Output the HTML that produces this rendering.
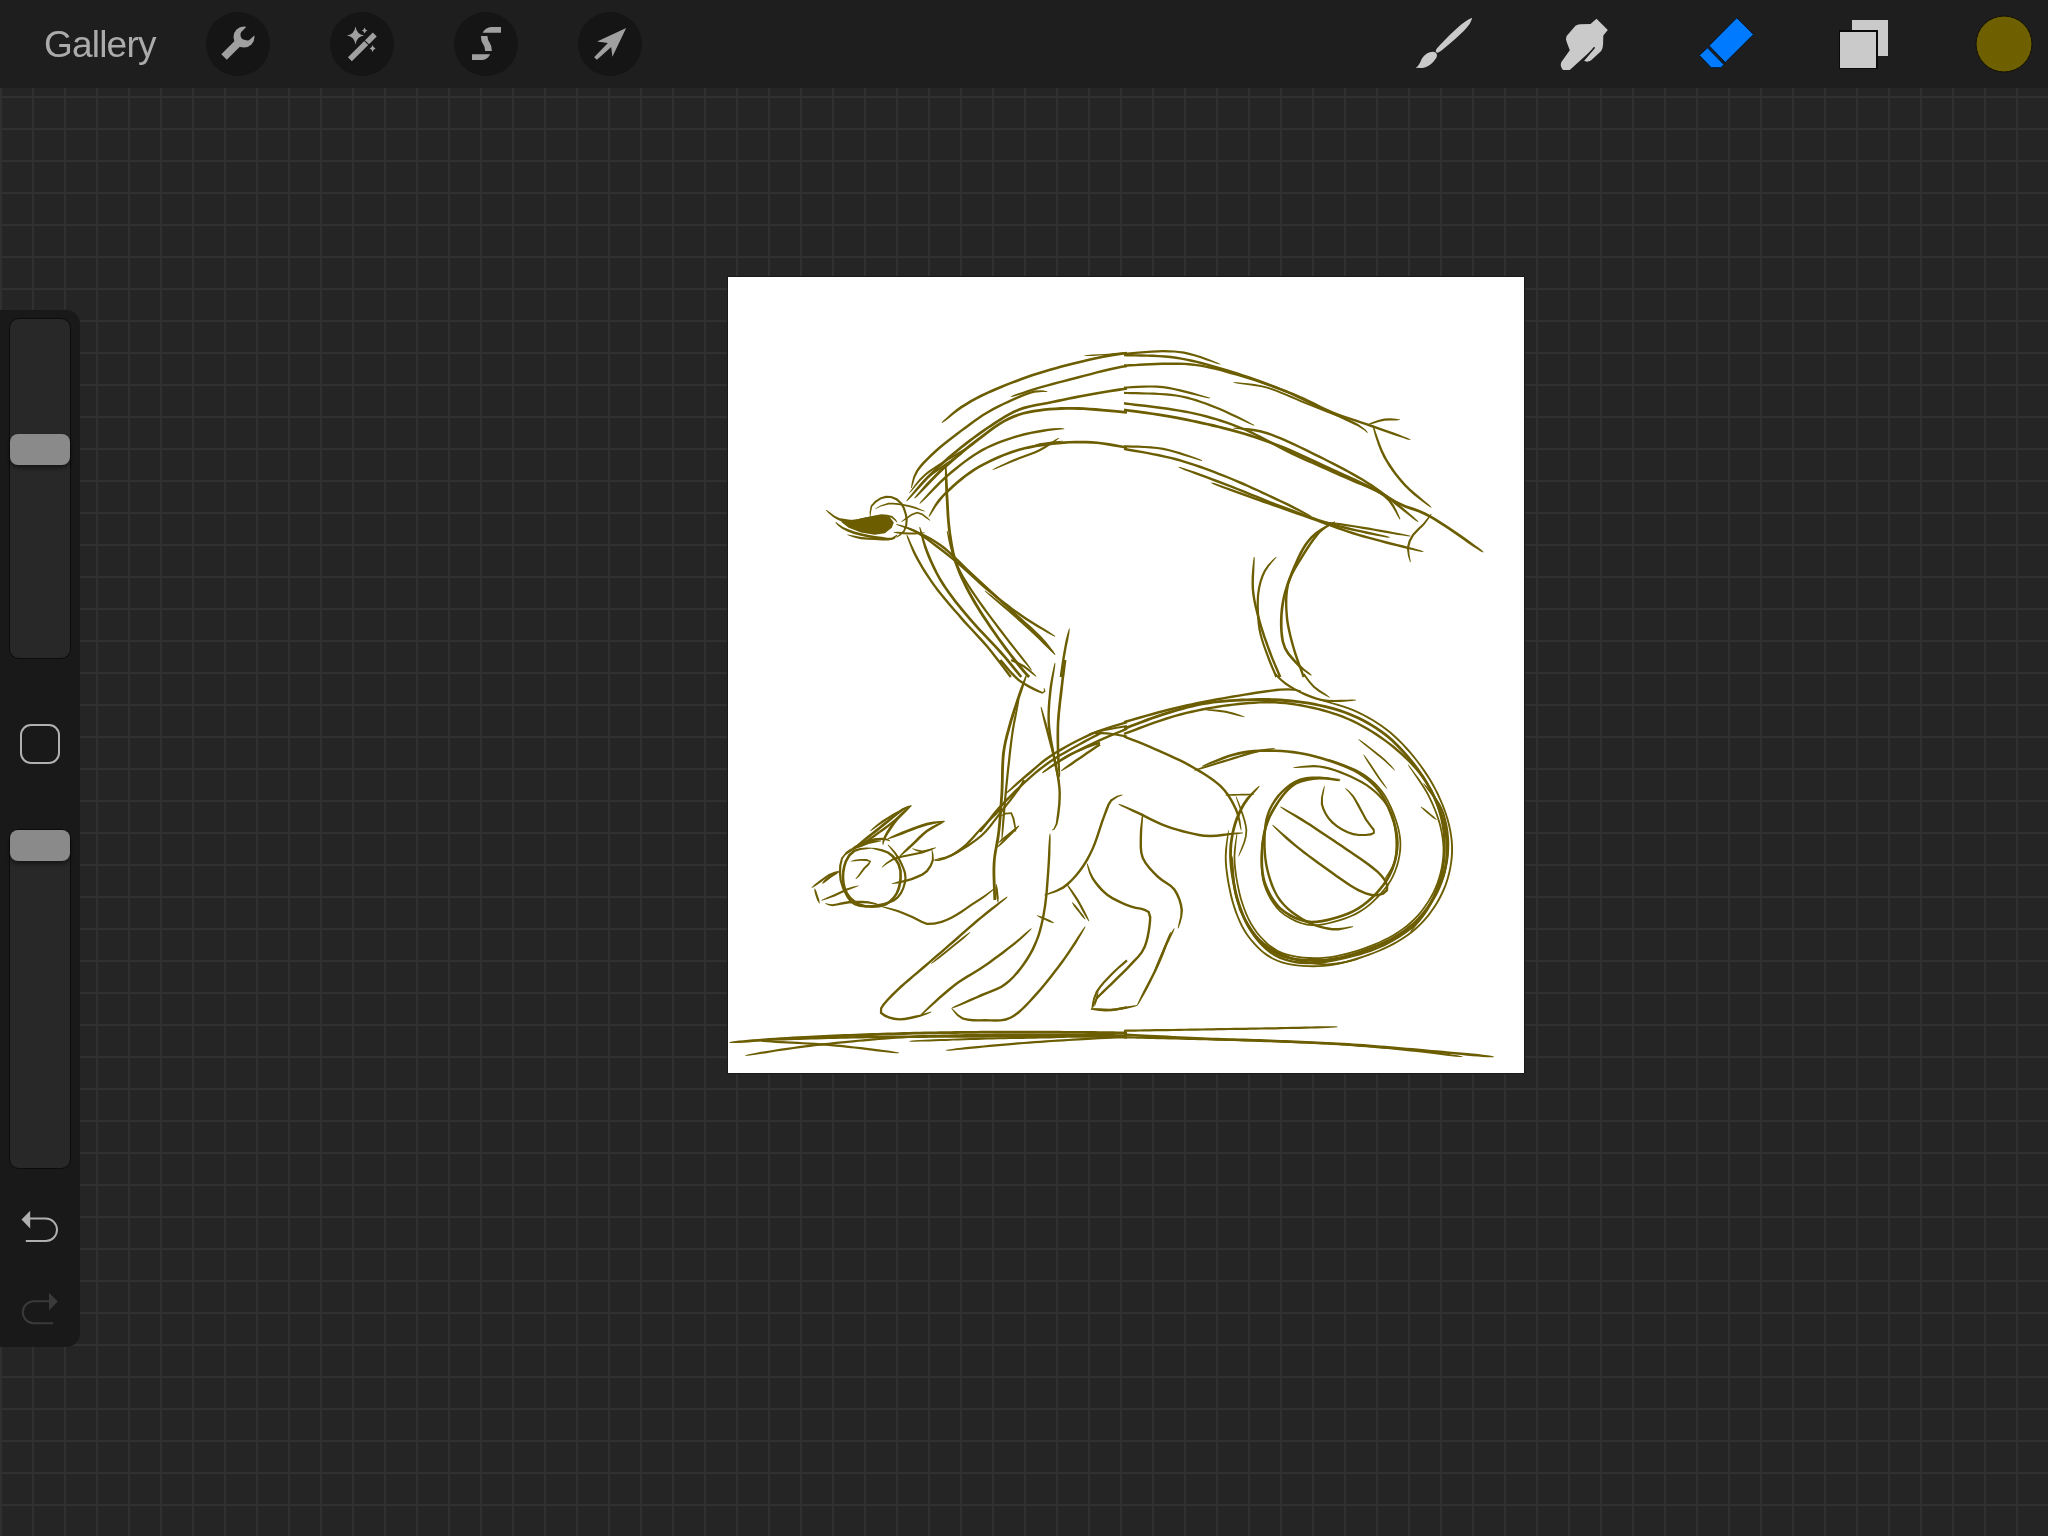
<!DOCTYPE html>
<html><head><meta charset="utf-8">
<style>
html,body{margin:0;padding:0;}
body{width:2048px;height:1536px;overflow:hidden;position:relative;background-color:#252525;
background-image:linear-gradient(to right,#303030 2px,transparent 2px),linear-gradient(to bottom,#303030 2px,transparent 2px);
background-size:32px 32px;font-family:"Liberation Sans",sans-serif;}
.abs{position:absolute;}
#top{left:0;top:0;width:2048px;height:88px;background:#1e1e1e;}
#gallery{will-change:transform;left:44px;top:23px;font-size:37px;letter-spacing:-0.8px;color:#ababab;line-height:44px;white-space:nowrap;}
.cbtn{width:64px;height:64px;border-radius:50%;background:#151515;top:12px;}
#canvas{left:728px;top:277px;width:796px;height:796px;background:#fff;box-shadow:0 0 0 1px #1a1a1a;}
#side{left:0;top:310px;width:80px;height:1037px;background:#191919;border-radius:0 14px 14px 0;}
.track{left:9px;width:62px;background:#282828;border:1px solid #0c0c0c;box-sizing:border-box;border-radius:10px;}
.thumb{left:10px;width:60px;height:31px;background:#8a8a8a;border-radius:8px;box-shadow:0 3px 4px rgba(0,0,0,.45);}
</style></head><body>
<div id="top" class="abs"></div>
<div id="gallery" class="abs">Gallery</div>
<div class="abs cbtn" style="left:206px"></div>
<div class="abs cbtn" style="left:330px"></div>
<div class="abs cbtn" style="left:454px"></div>
<div class="abs cbtn" style="left:578px"></div>
<div id="canvas" class="abs"></div>
<!--SKETCH--><svg class="abs" style="left:0;top:0" width="2048" height="1536" viewBox="0 0 2048 1536"><g fill="#6b5d00"><path d="M942.1,423.1L944.9,421.3L948.6,418.4L952.9,415.0L957.5,411.6L962.1,408.3L966.7,405.4L971.4,402.6L976.4,399.8L981.9,397.0L988.0,394.1L992.2,392.2L996.8,390.2L1001.6,388.2L1006.6,386.1L1011.7,384.1L1016.9,382.2L1022.0,380.3L1026.9,378.5L1031.8,376.8L1036.6,375.3L1041.5,373.7L1046.4,372.3L1051.3,370.8L1056.1,369.5L1061.0,368.1L1065.9,366.8L1070.9,365.5L1076.0,364.2L1081.2,363.0L1086.4,361.7L1091.5,360.6L1096.3,359.5L1100.8,358.6L1104.9,357.7L1112.1,356.4L1118.4,355.5L1123.5,354.8L1127.2,354.4L1126.8,351.7L1123.2,352.2L1118.1,352.9L1111.7,353.8L1104.4,355.1L1100.2,356.0L1095.7,357.0L1090.9,358.0L1085.8,359.2L1080.6,360.4L1075.4,361.7L1070.2,363.0L1065.2,364.3L1060.3,365.6L1055.4,366.9L1050.5,368.3L1045.6,369.7L1040.7,371.2L1035.8,372.7L1030.9,374.3L1026.0,376.0L1021.1,377.8L1015.9,379.7L1010.8,381.7L1005.6,383.7L1000.6,385.7L995.7,387.8L991.1,389.8L986.9,391.7L980.7,394.6L975.1,397.5L970.0,400.3L965.3,403.2L960.6,406.1L955.9,409.4L951.4,413.2L947.3,416.9L943.9,420.1L941.6,422.5Z"/><path d="M1083.8,355.8L1087.5,356.0L1092.8,355.9L1098.8,355.6L1104.7,355.3L1110.7,354.8L1117.2,354.2L1123.0,353.6L1127.1,353.2L1126.9,351.9L1122.9,352.3L1117.0,352.8L1110.6,353.5L1104.6,353.9L1098.8,354.3L1092.8,354.6L1087.5,355.0L1083.8,355.4Z"/><path d="M1011.0,397.1L1014.1,396.5L1018.2,395.3L1023.1,393.9L1028.5,392.3L1034.1,390.5L1039.8,388.8L1044.2,387.6L1049.0,386.3L1053.9,385.0L1059.0,383.6L1064.1,382.3L1069.2,380.9L1074.2,379.7L1078.9,378.4L1085.0,376.8L1091.2,375.2L1097.3,373.6L1103.0,372.2L1108.2,370.9L1112.7,369.9L1122.0,368.0L1127.2,367.3L1126.8,364.9L1121.6,365.6L1112.2,367.5L1107.7,368.6L1102.5,369.8L1096.7,371.3L1090.6,372.9L1084.4,374.5L1078.3,376.1L1073.6,377.3L1068.6,378.6L1063.5,379.9L1058.4,381.3L1053.3,382.6L1048.3,384.0L1043.6,385.3L1039.2,386.5L1033.4,388.2L1027.8,390.0L1022.4,391.9L1017.6,393.6L1013.6,395.1L1010.7,396.4Z"/><path d="M911.7,488.0L913.2,483.8L915.0,477.8L918.2,471.6L920.8,468.0L924.0,464.3L927.7,460.4L931.8,456.4L936.1,452.4L940.0,449.0L944.2,445.5L948.6,441.9L953.1,438.4L957.7,434.9L962.1,431.6L966.4,428.4L970.8,425.2L975.1,422.0L979.4,419.0L983.7,416.1L988.0,413.5L993.3,410.5L998.6,407.7L1003.9,405.1L1009.1,402.7L1013.9,400.5L1019.7,398.0L1025.1,395.8L1030.1,394.0L1034.4,392.7L1042.1,391.9L1047.3,391.9L1047.3,391.2L1042.1,390.3L1034.1,390.5L1029.4,391.7L1024.3,393.5L1018.7,395.8L1013.0,398.3L1008.1,400.5L1002.9,402.9L997.5,405.5L992.1,408.3L986.8,411.4L982.4,414.1L978.1,417.0L973.7,420.1L969.3,423.2L965.0,426.4L960.6,429.7L956.2,433.0L951.7,436.5L947.1,440.0L942.7,443.6L938.4,447.1L934.5,450.6L930.2,454.6L926.0,458.7L922.2,462.6L918.9,466.5L916.1,470.4L913.1,477.1L911.6,483.5L911.0,487.9Z"/><path d="M907.0,501.2L909.4,499.1L912.3,496.0L915.8,492.3L919.7,488.1L923.5,483.8L927.4,479.6L931.1,475.8L934.6,472.4L938.1,469.0L941.7,465.7L945.4,462.4L949.1,459.1L953.0,455.8L957.0,452.5L961.2,449.1L965.5,445.7L970.0,442.2L974.5,438.8L979.1,435.4L983.7,432.2L988.2,429.1L992.6,426.2L997.0,423.3L1001.4,420.4L1005.8,417.8L1010.2,415.3L1014.6,413.0L1019.1,411.0L1024.5,409.2L1029.9,407.7L1035.4,406.6L1041.0,405.5L1046.8,404.5L1052.8,403.3L1058.1,402.2L1063.7,401.0L1069.4,399.8L1075.1,398.7L1080.8,397.6L1086.4,396.5L1091.8,395.5L1097.4,394.5L1103.2,393.5L1109.1,392.6L1114.7,391.7L1119.8,390.9L1124.0,390.3L1127.2,389.8L1126.8,387.2L1123.6,387.7L1119.4,388.3L1114.3,389.1L1108.7,390.0L1102.8,390.9L1096.9,391.9L1091.3,392.9L1085.9,393.9L1080.3,395.0L1074.6,396.1L1068.8,397.2L1063.1,398.4L1057.6,399.6L1052.3,400.7L1046.3,401.9L1040.5,402.9L1034.8,404.0L1029.3,405.2L1023.7,406.6L1018.2,408.6L1013.5,410.6L1008.9,412.9L1004.4,415.5L1000.0,418.2L995.5,421.0L991.1,424.0L986.7,426.9L982.2,430.0L977.6,433.3L973.0,436.7L968.4,440.1L963.9,443.6L959.5,447.1L955.3,450.5L951.3,453.8L947.4,457.1L943.6,460.4L939.9,463.7L936.3,467.1L932.7,470.5L929.2,474.0L925.5,477.8L921.6,482.0L917.7,486.4L914.1,490.7L910.9,494.7L908.2,498.1L906.4,500.7Z"/><path d="M914.8,498.6L917.4,496.5L920.6,493.3L924.4,489.5L928.5,485.2L932.8,480.7L937.2,476.2L941.5,472.0L945.3,468.5L949.4,464.9L953.6,461.2L957.9,457.5L962.2,453.9L966.6,450.3L971.0,446.8L975.3,443.5L979.5,440.2L983.8,436.9L988.0,433.7L992.3,430.5L996.5,427.6L1000.7,424.8L1004.8,422.3L1008.9,420.2L1014.0,417.9L1019.0,416.0L1023.9,414.6L1028.9,413.5L1034.1,412.6L1039.7,411.7L1044.7,411.1L1049.9,410.5L1055.3,410.2L1060.8,409.9L1066.5,409.8L1072.4,409.8L1078.5,409.9L1083.7,410.1L1089.5,410.5L1095.7,410.9L1102.0,411.5L1108.1,412.0L1114.0,412.6L1119.2,413.1L1123.6,413.5L1126.9,413.8L1127.1,411.0L1123.8,410.7L1119.4,410.3L1114.2,409.8L1108.4,409.2L1102.2,408.7L1095.9,408.1L1089.7,407.7L1083.9,407.3L1078.6,407.1L1072.4,407.0L1066.5,407.0L1060.7,407.1L1055.1,407.4L1049.7,407.8L1044.4,408.3L1039.3,408.9L1033.6,409.8L1028.3,410.8L1023.2,411.9L1018.1,413.4L1013.0,415.3L1007.6,417.7L1003.5,419.9L999.2,422.4L995.0,425.2L990.7,428.3L986.4,431.4L982.1,434.7L977.8,438.0L973.5,441.3L969.2,444.6L964.9,448.1L960.5,451.7L956.1,455.4L951.7,459.1L947.5,462.8L943.5,466.4L939.6,470.0L935.2,474.2L930.8,478.7L926.4,483.3L922.5,487.8L919.0,491.9L916.2,495.3L914.2,498.1Z"/><path d="M920.0,503.8L922.4,501.8L925.4,498.9L928.9,495.5L932.8,491.6L936.8,487.5L941.0,483.3L945.1,479.4L949.1,475.8L953.1,472.5L957.2,469.2L961.3,465.8L965.5,462.6L969.8,459.5L974.1,456.5L978.4,453.8L982.8,451.2L987.8,448.6L993.0,446.2L998.2,444.0L1003.5,442.0L1008.7,440.2L1013.9,438.6L1019.0,437.0L1025.0,435.4L1031.2,434.1L1037.3,432.9L1043.2,432.0L1048.4,431.1L1052.6,430.4L1060.5,429.4L1064.2,429.2L1064.3,428.5L1060.5,427.9L1052.4,428.3L1048.0,428.8L1042.8,429.6L1036.9,430.5L1030.7,431.7L1024.4,433.1L1018.3,434.7L1013.2,436.2L1008.0,437.9L1002.7,439.8L997.3,441.8L992.0,444.0L986.8,446.4L981.6,449.1L977.2,451.7L972.8,454.5L968.4,457.5L964.1,460.7L959.8,463.9L955.6,467.3L951.5,470.6L947.6,474.0L943.5,477.6L939.3,481.6L935.1,485.8L931.1,490.0L927.4,494.0L924.1,497.7L921.4,500.8L919.4,503.3Z"/><path d="M929.2,516.8L931.2,514.2L933.6,510.5L936.5,506.1L940.0,501.4L944.1,496.6L947.1,493.6L950.5,490.4L954.2,487.0L958.1,483.6L962.2,480.2L966.4,476.8L970.8,473.7L975.1,470.8L979.6,468.1L984.2,465.5L989.1,463.0L994.0,460.7L999.0,458.4L1004.0,456.3L1009.0,454.4L1013.9,452.7L1019.4,451.0L1024.9,449.6L1030.5,448.4L1036.0,447.3L1041.6,446.4L1047.1,445.7L1052.7,445.0L1058.3,444.4L1063.9,443.9L1069.5,443.6L1075.1,443.4L1080.7,443.4L1086.2,443.5L1091.5,443.7L1097.0,444.1L1102.8,444.8L1108.7,445.7L1114.3,446.7L1119.3,447.6L1123.6,448.3L1126.8,448.9L1127.2,446.3L1124.1,445.7L1119.8,445.0L1114.7,444.1L1109.1,443.1L1103.2,442.2L1097.3,441.5L1091.7,441.0L1086.2,440.8L1080.7,440.8L1075.1,440.8L1069.4,441.0L1063.7,441.3L1058.0,441.8L1052.4,442.4L1046.8,443.0L1041.2,443.8L1035.6,444.7L1029.9,445.8L1024.3,447.0L1018.7,448.5L1013.0,450.2L1008.1,452.0L1003.0,453.9L997.9,456.0L992.9,458.3L987.9,460.7L983.0,463.2L978.2,465.8L973.7,468.6L969.2,471.5L964.8,474.7L960.5,478.1L956.4,481.6L952.4,485.0L948.7,488.5L945.3,491.7L942.2,494.9L937.9,499.8L934.5,504.8L931.9,509.5L929.8,513.4L928.5,516.4Z"/><path d="M992.8,470.0L996.5,468.7L1001.8,466.6L1007.8,464.1L1013.9,461.6L1018.8,459.6L1024.2,457.6L1029.7,455.6L1035.1,453.4L1040.0,451.2L1045.8,447.9L1051.4,444.2L1056.1,440.8L1059.2,438.2L1058.8,437.7L1055.3,439.6L1050.4,442.7L1044.8,446.0L1039.0,449.2L1034.2,451.4L1028.9,453.5L1023.4,455.6L1018.0,457.6L1013.0,459.6L1007.0,462.2L1001.1,465.0L996.0,467.5L992.5,469.4Z"/><path d="M1026.6,449.1L1031.8,447.4L1039.7,445.0L1045.3,444.1L1052.1,443.2L1058.6,442.3L1063.0,441.3L1062.9,440.8L1058.4,440.9L1051.9,441.5L1045.0,442.4L1039.3,443.3L1031.3,446.0L1026.4,448.6Z"/><path d="M909.5,493.3L912.4,490.2L916.3,485.5L920.8,480.4L925.6,475.7L929.7,472.4L934.2,469.3L938.9,466.3L943.9,463.2L948.9,460.1L953.4,457.4L958.3,454.4L963.3,451.3L967.9,448.4L971.8,445.9L974.5,443.9L974.2,443.4L971.2,444.9L967.2,447.1L962.4,449.7L957.3,452.7L952.3,455.7L947.8,458.5L942.9,461.5L937.9,464.6L933.1,467.7L928.5,470.8L924.3,474.2L919.4,479.1L915.0,484.5L911.4,489.4L909.1,493.0Z"/><path d="M916.1,490.8L919.2,487.6L923.4,483.0L928.3,478.3L932.3,475.1L937.0,471.8L941.8,468.5L946.4,465.4L952.3,461.3L957.8,457.3L961.6,454.4L961.2,453.8L957.0,456.0L951.2,459.6L945.1,463.6L940.6,466.7L935.8,469.9L931.0,473.3L926.8,476.7L922.0,481.7L918.0,486.7L915.5,490.3Z"/><path d="M870.6,516.6L871.0,512.0L872.3,506.6L876.2,502.5L881.1,499.3L885.9,497.9L890.8,498.1L896.0,500.2L900.6,504.3L902.9,508.7L904.7,514.2L905.6,519.2L905.2,525.4L903.3,530.4L899.6,534.3L896.1,537.1L896.5,537.7L900.5,535.4L904.8,531.4L907.2,525.8L907.8,519.1L906.8,513.7L904.9,507.8L902.3,502.9L897.2,498.3L891.3,496.0L885.6,495.7L880.2,497.4L874.8,500.9L870.7,505.7L869.6,511.8L869.9,516.6Z"/><path d="M875.6,509.0L880.9,506.6L888.6,504.4L893.2,504.5L898.6,505.1L904.1,506.0L909.1,507.0L915.2,508.7L920.8,510.5L924.8,511.6L925.0,511.1L921.3,509.4L915.7,507.1L909.5,505.3L904.4,504.3L898.8,503.3L893.3,502.7L888.3,502.7L880.4,505.4L875.3,508.5Z"/><path d="M906.4,535.0L907.3,538.2L908.9,542.6L910.9,547.8L913.3,553.4L916.0,558.8L918.6,563.3L921.3,567.9L924.2,572.7L927.4,577.6L930.8,582.6L934.4,587.6L937.3,591.4L940.4,595.3L943.6,599.3L946.9,603.3L950.3,607.3L953.8,611.2L957.2,615.1L960.5,618.9L964.2,623.2L968.0,627.3L971.8,631.3L975.6,635.4L979.3,639.4L982.9,643.4L986.5,647.6L990.2,652.0L994.0,656.9L997.9,662.0L1001.6,666.8L1005.0,671.3L1007.8,675.0L1009.9,677.7L1011.8,676.3L1009.7,673.5L1006.9,669.8L1003.5,665.4L999.8,660.5L995.9,655.4L992.0,650.5L988.3,646.0L984.7,641.8L981.1,637.8L977.3,633.7L973.6,629.7L969.8,625.7L966.0,621.6L962.3,617.3L959.0,613.6L955.6,609.7L952.2,605.7L948.8,601.7L945.5,597.8L942.2,593.8L939.2,590.0L936.3,586.2L932.7,581.2L929.4,576.3L926.3,571.4L923.3,566.7L920.6,562.1L918.2,557.7L915.4,552.3L912.9,546.9L910.6,541.9L908.7,537.6L907.0,534.7Z"/><path d="M919.3,527.1L919.9,530.7L920.9,535.6L922.3,541.3L924.1,547.5L926.3,553.5L928.3,558.4L930.6,563.5L933.0,568.8L935.7,574.1L938.7,579.5L942.0,585.0L944.8,589.1L947.7,593.3L950.9,597.6L954.1,601.9L957.6,606.2L961.0,610.5L964.6,614.7L968.2,619.0L971.5,622.8L975.0,626.7L978.6,630.7L982.3,634.6L986.0,638.5L989.6,642.3L993.1,646.0L996.4,649.5L999.4,652.9L1003.8,657.8L1007.9,662.8L1011.8,667.5L1015.2,671.7L1018.1,675.2L1020.3,677.8L1022.3,676.2L1020.1,673.5L1017.3,670.0L1013.8,665.8L1009.9,661.1L1005.8,656.1L1001.4,651.1L998.4,647.7L995.1,644.2L991.6,640.5L987.9,636.7L984.3,632.8L980.6,628.9L977.0,624.9L973.5,621.1L970.2,617.3L966.6,613.1L963.1,608.8L959.6,604.5L956.2,600.2L953.0,596.0L949.9,591.8L947.0,587.7L944.3,583.6L941.0,578.2L938.0,572.9L935.4,567.6L933.0,562.4L930.8,557.4L928.8,552.6L926.6,546.7L924.6,540.7L922.9,535.0L921.4,530.3L920.1,526.9Z"/><path d="M896.2,524.7L900.7,526.6L907.2,528.9L914.0,532.0L917.8,534.2L921.7,536.8L925.8,539.6L930.1,542.8L934.6,546.2L938.6,549.3L942.9,552.5L947.3,556.0L951.7,559.6L956.2,563.3L960.6,567.0L964.2,570.2L967.8,573.4L971.3,576.7L974.9,580.0L978.6,583.4L982.5,586.9L986.6,590.4L990.5,593.6L994.6,596.9L998.8,600.3L1003.1,603.6L1007.5,607.0L1011.9,610.3L1016.3,613.5L1020.6,616.5L1025.7,620.0L1031.3,623.5L1036.9,627.0L1042.4,630.1L1047.4,632.9L1051.7,635.2L1054.9,636.7L1055.3,636.1L1052.4,633.9L1048.4,631.3L1043.6,628.2L1038.2,624.9L1032.6,621.5L1027.1,618.0L1022.0,614.5L1017.7,611.5L1013.3,608.4L1009.0,605.1L1004.6,601.7L1000.3,598.4L996.1,595.0L992.0,591.7L988.2,588.6L984.1,585.1L980.2,581.6L976.5,578.2L973.0,574.9L969.4,571.6L965.8,568.3L962.2,565.1L957.7,561.4L953.3,557.7L948.8,554.1L944.4,550.6L940.1,547.3L936.1,544.3L931.5,540.9L927.2,537.7L923.1,534.8L919.1,532.1L915.0,529.8L907.9,526.9L901.1,525.0L896.4,524.0Z"/><path d="M909.1,528.6L911.8,530.4L915.5,532.3L919.9,534.6L924.8,537.2L929.9,539.9L935.0,542.9L939.8,546.2L943.4,549.0L947.1,552.1L950.8,555.5L954.6,559.0L958.4,562.7L962.2,566.4L966.0,570.1L969.8,573.8L973.6,577.4L977.4,580.9L981.1,584.4L985.0,587.9L988.8,591.4L992.6,594.9L996.3,598.4L1000.1,601.8L1003.8,605.3L1007.4,608.6L1011.6,612.4L1015.8,616.2L1020.0,620.0L1024.2,623.8L1028.2,627.4L1032.0,630.9L1035.5,634.2L1038.6,637.2L1044.0,642.9L1048.5,647.9L1052.1,652.0L1054.8,654.8L1055.4,654.4L1053.3,651.1L1050.0,646.7L1045.7,641.3L1040.4,635.5L1037.2,632.4L1033.7,629.1L1029.9,625.6L1025.8,622.0L1021.7,618.2L1017.4,614.4L1013.2,610.6L1009.1,606.8L1005.4,603.5L1001.7,600.1L998.0,596.6L994.2,593.1L990.4,589.6L986.6,586.1L982.8,582.6L979.0,579.1L975.2,575.6L971.5,572.1L967.7,568.4L963.9,564.7L960.1,560.9L956.2,557.3L952.5,553.7L948.7,550.3L945.0,547.1L941.3,544.2L936.3,540.9L931.1,537.8L925.9,535.0L920.8,532.7L916.3,530.7L912.4,529.1L909.5,528.0Z"/><path d="M945.3,464.5L945.0,468.2L944.9,473.3L944.9,479.4L945.1,485.9L945.3,492.4L945.7,498.4L946.0,504.1L946.3,509.8L946.6,515.5L947.1,521.2L947.6,526.9L948.3,532.4L949.0,537.7L949.8,542.9L950.7,548.1L951.8,553.3L953.2,558.5L954.8,563.9L956.5,568.6L958.4,573.4L960.5,578.2L962.8,583.1L965.2,588.0L967.8,593.0L970.6,598.0L973.1,602.5L975.9,607.1L978.8,611.8L981.8,616.5L984.9,621.1L988.0,625.7L991.1,630.2L994.1,634.6L997.6,639.5L1001.2,644.5L1004.8,649.4L1008.4,654.1L1011.8,658.5L1014.9,662.5L1017.6,665.9L1022.4,671.8L1025.8,675.6L1028.1,678.0L1030.1,676.0L1027.9,673.7L1024.6,670.0L1019.8,664.1L1017.1,660.8L1014.0,656.8L1010.6,652.4L1007.1,647.7L1003.4,642.8L999.8,637.9L996.4,633.0L993.4,628.7L990.3,624.2L987.3,619.6L984.2,614.9L981.2,610.3L978.3,605.6L975.6,601.1L973.0,596.6L970.3,591.7L967.7,586.7L965.3,581.9L963.1,577.1L961.0,572.3L959.2,567.6L957.5,563.0L955.9,557.7L954.5,552.6L953.5,547.6L952.6,542.5L951.8,537.3L951.0,532.0L950.4,526.6L949.8,521.0L949.4,515.3L949.1,509.7L948.8,503.9L948.5,498.3L948.1,492.3L947.9,485.8L947.5,479.3L947.1,473.2L946.7,468.2L946.2,464.5Z"/><path d="M946.7,531.0L947.3,534.6L948.2,539.6L949.5,545.5L951.1,551.8L953.0,558.1L955.1,563.9L957.2,568.4L959.4,572.8L961.8,577.1L964.4,581.4L967.2,585.8L970.2,590.5L973.5,595.3L976.2,599.3L979.2,603.6L982.3,607.9L985.5,612.3L988.9,616.8L992.2,621.3L995.6,625.8L998.9,630.2L1002.2,634.4L1005.5,638.8L1009.1,643.4L1012.8,648.1L1016.5,652.8L1020.1,657.3L1023.5,661.5L1026.6,665.1L1029.3,668.2L1031.4,670.4L1031.9,670.0L1030.3,667.4L1027.9,664.1L1025.0,660.3L1021.8,656.0L1018.2,651.5L1014.5,646.8L1010.8,642.1L1007.3,637.5L1003.9,633.1L1000.7,628.8L997.4,624.5L994.0,620.0L990.6,615.5L987.3,611.0L984.1,606.6L981.0,602.3L978.0,598.1L975.3,594.1L972.1,589.2L969.1,584.7L966.3,580.3L963.7,576.0L961.4,571.7L959.2,567.4L957.2,563.0L955.1,557.4L953.2,551.2L951.5,545.0L949.9,539.2L948.6,534.3L947.4,530.8Z"/><path d="M984.6,591.0L987.0,593.3L990.3,596.3L994.3,599.8L998.7,603.6L1003.3,607.4L1007.6,611.1L1011.2,614.2L1015.0,617.6L1018.8,621.0L1022.7,624.4L1026.5,627.9L1030.1,631.3L1033.6,634.5L1038.4,639.1L1043.3,644.0L1048.0,648.5L1051.9,652.2L1054.9,654.8L1055.3,654.4L1052.8,651.4L1049.1,647.3L1044.7,642.6L1039.8,637.7L1035.0,633.1L1031.5,629.8L1027.8,626.4L1024.0,623.0L1020.2,619.5L1016.3,616.1L1012.5,612.8L1008.9,609.6L1004.6,605.9L1000.0,602.0L995.5,598.4L991.3,595.1L987.7,592.4L985.0,590.6Z"/><path d="M1069.1,628.5L1067.5,633.2L1065.7,640.0L1064.4,646.6L1063.4,652.0L1062.5,657.2L1061.7,662.2L1060.5,670.5L1059.7,676.8L1062.1,677.2L1062.9,670.9L1064.1,662.6L1064.9,657.6L1065.8,652.4L1066.7,647.0L1068.1,640.5L1069.3,633.6L1069.8,628.6Z"/><path d="M893.6,532.5L897.6,533.4L903.4,534.2L909.3,534.5L915.1,534.4L920.9,533.8L924.9,533.0L924.9,532.4L920.8,532.2L915.0,532.4L909.3,532.5L903.6,532.2L897.8,531.8L893.7,531.9Z"/><path d="M901.6,522.0L906.1,519.4L911.9,515.6L917.1,513.6L921.7,515.1L926.4,518.4L930.0,520.7L930.3,520.3L927.3,517.3L922.5,513.5L917.1,511.8L911.1,514.0L905.2,518.2L901.3,521.6Z"/><path d="M1124.1,354.9L1127.7,354.6L1132.8,354.2L1138.8,353.7L1145.3,353.2L1151.8,352.8L1157.9,352.4L1163.1,352.3L1169.0,352.4L1174.1,352.6L1178.8,353.1L1183.6,353.8L1188.9,354.9L1194.1,356.3L1199.9,358.1L1206.0,360.2L1211.8,362.1L1216.7,363.7L1220.2,364.6L1220.5,363.9L1217.1,362.4L1212.4,360.4L1206.7,358.2L1200.6,356.1L1194.7,354.2L1189.4,352.8L1184.0,351.6L1179.1,350.9L1174.2,350.4L1169.0,350.2L1163.1,350.1L1157.8,350.2L1151.6,350.6L1145.1,351.0L1138.6,351.5L1132.6,352.0L1127.6,352.4L1123.9,352.7Z"/><path d="M1124.0,356.3L1127.1,356.4L1131.1,356.5L1135.8,356.6L1141.1,356.7L1146.8,356.8L1152.7,357.0L1158.7,357.3L1164.7,357.7L1170.5,358.2L1175.9,358.9L1181.1,359.8L1186.3,360.8L1191.4,361.9L1196.6,363.1L1201.8,364.4L1207.0,365.8L1212.2,367.3L1217.4,368.8L1222.6,370.3L1227.8,371.9L1232.6,373.4L1237.4,374.9L1242.3,376.5L1247.3,378.1L1252.2,379.8L1257.1,381.5L1261.9,383.3L1266.6,385.0L1271.1,386.7L1275.6,388.4L1279.8,390.1L1285.3,392.4L1290.4,394.6L1295.3,396.9L1300.1,399.2L1304.7,401.5L1309.3,403.7L1314.0,406.0L1318.8,408.3L1323.9,410.7L1329.3,413.1L1334.8,415.6L1340.2,418.1L1345.4,420.5L1350.2,422.7L1354.4,424.7L1357.8,426.3L1364.9,430.8L1367.2,433.0L1367.8,432.5L1365.8,429.7L1358.9,424.5L1355.4,422.6L1351.2,420.6L1346.4,418.3L1341.2,415.9L1335.8,413.4L1330.3,410.9L1324.9,408.5L1319.8,406.1L1315.0,403.8L1310.4,401.6L1305.8,399.3L1301.1,397.0L1296.4,394.7L1291.4,392.4L1286.2,390.1L1280.7,387.9L1276.4,386.2L1272.0,384.5L1267.4,382.7L1262.7,381.0L1257.9,379.3L1253.0,377.5L1248.0,375.8L1243.1,374.2L1238.2,372.6L1233.3,371.1L1228.5,369.6L1223.3,368.0L1218.1,366.5L1212.9,365.0L1207.7,363.5L1202.4,362.1L1197.2,360.8L1192.0,359.5L1186.7,358.4L1181.5,357.4L1176.3,356.5L1170.8,355.8L1164.9,355.3L1158.9,354.9L1152.8,354.6L1146.8,354.4L1141.1,354.3L1135.8,354.2L1131.1,354.1L1127.1,354.0L1124.0,353.9Z"/><path d="M1124.0,366.8L1127.0,366.7L1130.6,366.5L1134.9,366.3L1139.7,366.0L1145.0,365.8L1150.5,365.5L1156.2,365.3L1162.1,365.1L1167.9,364.9L1173.6,364.9L1179.1,364.9L1184.3,365.1L1189.0,365.4L1194.7,366.1L1200.2,366.8L1205.5,367.8L1210.6,368.9L1215.7,370.1L1220.7,371.3L1225.6,372.7L1230.6,374.2L1235.7,375.6L1240.8,377.1L1245.6,378.5L1250.5,380.0L1255.4,381.6L1260.3,383.3L1265.2,384.9L1270.1,386.7L1274.9,388.4L1279.6,390.2L1284.2,391.9L1288.6,393.6L1292.8,395.3L1298.3,397.6L1303.6,400.0L1308.6,402.4L1313.4,404.8L1318.1,407.1L1322.7,409.4L1327.3,411.6L1331.9,413.5L1336.9,415.5L1341.7,417.3L1346.3,418.8L1350.8,420.3L1355.5,421.8L1360.5,423.5L1365.8,425.3L1370.5,426.9L1375.8,428.8L1381.4,430.8L1387.2,432.8L1392.8,434.8L1398.2,436.6L1403.1,438.1L1407.2,439.4L1410.3,440.1L1410.6,439.4L1407.7,438.0L1403.7,436.4L1399.0,434.6L1393.7,432.5L1388.0,430.5L1382.2,428.5L1376.6,426.5L1371.3,424.6L1366.6,423.0L1361.2,421.2L1356.3,419.5L1351.6,418.0L1347.0,416.5L1342.5,415.0L1337.8,413.3L1332.8,411.3L1328.3,409.3L1323.8,407.2L1319.2,405.0L1314.5,402.6L1309.6,400.2L1304.6,397.8L1299.3,395.4L1293.7,393.1L1289.5,391.4L1285.0,389.7L1280.4,387.9L1275.7,386.1L1270.9,384.4L1266.0,382.7L1261.1,381.0L1256.1,379.3L1251.2,377.7L1246.3,376.2L1241.5,374.8L1236.4,373.3L1231.3,371.8L1226.3,370.4L1221.3,369.0L1216.3,367.7L1211.1,366.5L1205.9,365.4L1200.5,364.5L1195.0,363.7L1189.2,363.0L1184.4,362.7L1179.2,362.5L1173.6,362.5L1167.9,362.5L1162.0,362.6L1156.1,362.8L1150.4,363.1L1144.8,363.3L1139.6,363.6L1134.8,363.9L1130.5,364.1L1126.9,364.2L1124.0,364.3Z"/><path d="M1233.3,382.8L1236.9,383.5L1241.9,384.2L1247.7,385.0L1254.2,386.0L1260.7,387.1L1267.0,388.6L1271.5,390.1L1276.3,391.8L1281.1,393.7L1286.0,395.7L1291.0,397.9L1296.0,400.1L1301.0,402.2L1305.9,404.2L1311.1,406.3L1316.6,408.5L1322.3,410.8L1327.9,413.0L1333.2,415.0L1338.1,416.8L1342.1,418.3L1345.2,419.2L1345.5,418.7L1342.6,417.2L1338.6,415.4L1333.9,413.4L1328.6,411.2L1323.0,408.9L1317.3,406.7L1311.8,404.4L1306.7,402.4L1301.8,400.4L1296.8,398.2L1291.8,396.1L1286.8,393.9L1281.9,391.9L1277.0,389.9L1272.2,388.2L1267.5,386.7L1261.1,385.2L1254.5,384.0L1248.0,383.2L1242.0,382.7L1237.1,382.3L1233.4,382.2Z"/><path d="M1124.0,388.8L1127.5,388.6L1132.2,388.3L1137.7,388.0L1143.8,387.7L1150.2,387.6L1156.7,387.7L1162.9,388.2L1168.0,389.0L1173.6,390.1L1179.6,391.4L1185.7,392.9L1191.6,394.4L1197.2,395.8L1202.3,397.0L1206.6,397.9L1209.9,398.4L1210.0,397.8L1206.9,396.7L1202.7,395.4L1197.7,393.9L1192.2,392.3L1186.2,390.8L1180.1,389.3L1174.1,387.9L1168.4,386.8L1163.2,386.1L1156.8,385.5L1150.2,385.4L1143.7,385.5L1137.5,385.8L1132.0,386.1L1127.4,386.4L1124.0,386.6Z"/><path d="M1124.0,394.0L1127.1,394.1L1131.3,394.2L1136.2,394.3L1141.7,394.4L1147.6,394.6L1153.6,394.8L1159.7,395.1L1165.6,395.4L1171.0,395.9L1175.9,396.6L1181.4,397.6L1186.5,398.7L1191.4,400.0L1196.1,401.4L1200.7,403.0L1205.3,404.6L1210.0,406.4L1214.7,408.2L1219.9,410.3L1225.4,412.7L1231.0,415.4L1236.6,418.0L1242.0,420.5L1246.8,422.8L1250.9,424.6L1254.1,425.7L1254.4,425.1L1251.5,423.4L1247.6,421.3L1242.9,418.8L1237.6,416.1L1232.0,413.4L1226.3,410.7L1220.7,408.3L1215.6,406.2L1210.7,404.3L1206.1,402.6L1201.4,400.9L1196.8,399.3L1192.0,397.9L1187.0,396.6L1181.8,395.4L1176.3,394.4L1171.3,393.8L1165.8,393.2L1159.8,392.9L1153.7,392.6L1147.6,392.4L1141.7,392.2L1136.2,392.1L1131.3,392.0L1127.2,391.9L1124.0,391.8Z"/><path d="M1123.8,411.2L1126.9,411.6L1130.8,412.2L1135.4,412.8L1140.6,413.5L1146.3,414.3L1152.2,415.1L1158.2,416.0L1164.3,417.0L1170.2,418.0L1175.8,419.0L1180.9,420.0L1186.0,421.0L1191.3,422.1L1196.7,423.2L1202.1,424.4L1207.4,425.6L1212.8,426.9L1218.0,428.1L1223.2,429.4L1228.2,430.7L1233.0,432.0L1238.6,433.6L1244.0,435.1L1249.2,436.7L1254.2,438.3L1259.2,440.0L1264.2,441.7L1269.2,443.5L1274.4,445.5L1279.7,447.6L1284.3,449.4L1289.0,451.4L1293.9,453.5L1298.8,455.7L1303.7,458.0L1308.7,460.2L1313.5,462.5L1318.3,464.7L1323.0,466.9L1327.5,469.0L1331.8,471.0L1337.3,473.5L1342.7,476.0L1347.8,478.3L1352.7,480.6L1357.5,482.8L1362.1,484.9L1366.5,487.1L1370.8,489.2L1376.1,492.0L1380.9,494.8L1385.5,497.5L1390.0,500.2L1394.6,502.8L1399.4,505.3L1404.3,507.5L1409.0,509.2L1413.7,510.7L1418.7,512.5L1424.2,514.9L1430.6,518.3L1434.3,520.6L1438.6,523.3L1443.3,526.3L1448.3,529.6L1453.4,533.1L1458.5,536.6L1463.5,540.1L1468.3,543.5L1472.8,546.4L1476.9,549.0L1480.3,551.2L1483.1,552.6L1483.6,551.9L1481.3,549.8L1478.1,547.3L1474.2,544.4L1469.9,541.2L1465.1,537.8L1460.1,534.3L1454.9,530.8L1449.8,527.3L1444.8,524.0L1440.1,520.9L1435.8,518.2L1432.0,515.9L1425.5,512.4L1419.8,509.9L1414.7,508.1L1410.0,506.5L1405.4,504.9L1400.6,502.8L1395.9,500.4L1391.4,497.8L1386.9,495.1L1382.3,492.4L1377.4,489.6L1372.0,486.7L1367.7,484.5L1363.3,482.4L1358.7,480.2L1353.9,478.0L1349.0,475.7L1343.8,473.4L1338.5,471.0L1332.9,468.4L1328.7,466.5L1324.2,464.4L1319.5,462.2L1314.7,460.0L1309.8,457.7L1304.9,455.4L1299.9,453.2L1295.0,451.0L1290.1,448.8L1285.4,446.8L1280.8,445.0L1275.4,442.9L1270.2,440.9L1265.1,439.1L1260.1,437.3L1255.1,435.7L1250.0,434.0L1244.8,432.5L1239.4,430.9L1233.7,429.3L1228.9,428.0L1223.9,426.7L1218.7,425.4L1213.4,424.1L1208.1,422.9L1202.7,421.7L1197.3,420.5L1191.9,419.4L1186.6,418.3L1181.4,417.2L1176.3,416.2L1170.7,415.2L1164.7,414.2L1158.6,413.3L1152.6,412.4L1146.7,411.5L1141.0,410.7L1135.8,410.0L1131.2,409.4L1127.3,408.9L1124.2,408.4Z"/><path d="M1123.8,404.5L1126.8,404.9L1130.4,405.3L1134.7,405.9L1139.5,406.4L1144.7,407.0L1150.3,407.7L1156.0,408.5L1161.9,409.2L1167.7,410.0L1173.5,410.9L1179.0,411.8L1184.1,412.7L1188.9,413.6L1194.6,414.8L1200.1,416.1L1205.4,417.5L1210.5,418.9L1215.6,420.3L1220.6,421.9L1225.6,423.5L1230.6,425.3L1235.6,427.2L1240.7,429.2L1245.4,431.1L1250.1,433.3L1254.9,435.5L1259.6,437.9L1264.3,440.4L1269.0,442.9L1273.8,445.4L1278.5,448.0L1283.2,450.4L1288.0,452.9L1292.7,455.2L1297.5,457.4L1302.4,459.7L1307.3,461.9L1312.3,464.1L1317.2,466.3L1322.1,468.5L1326.9,470.6L1331.6,472.7L1336.2,474.7L1340.6,476.7L1344.9,478.6L1350.5,481.1L1356.1,483.4L1361.5,485.6L1366.7,487.8L1371.6,489.9L1376.0,492.0L1380.1,494.3L1383.6,496.7L1388.4,501.3L1392.1,506.5L1395.2,511.7L1397.6,516.3L1399.7,519.4L1400.4,519.0L1399.0,515.6L1396.9,510.8L1394.1,505.3L1390.2,499.7L1385.2,494.8L1381.4,492.2L1377.2,489.9L1372.6,487.7L1367.6,485.5L1362.4,483.4L1357.0,481.2L1351.5,478.9L1345.8,476.4L1341.6,474.5L1337.2,472.5L1332.6,470.5L1327.9,468.4L1323.0,466.3L1318.2,464.1L1313.3,461.9L1308.3,459.7L1303.4,457.5L1298.6,455.2L1293.8,453.0L1289.1,450.7L1284.4,448.3L1279.6,445.8L1274.9,443.3L1270.2,440.8L1265.4,438.3L1260.7,435.8L1255.9,433.4L1251.2,431.1L1246.4,428.9L1241.6,426.9L1236.5,424.9L1231.4,423.0L1226.4,421.2L1221.3,419.6L1216.3,418.0L1211.2,416.5L1206.0,415.1L1200.6,413.8L1195.1,412.5L1189.4,411.2L1184.6,410.3L1179.4,409.4L1173.8,408.5L1168.1,407.6L1162.2,406.8L1156.3,406.1L1150.6,405.3L1145.0,404.6L1139.8,404.0L1135.0,403.4L1130.7,402.9L1127.1,402.5L1124.2,402.1Z"/><path d="M1233.3,428.4L1236.8,429.1L1241.4,429.6L1246.9,430.3L1253.1,431.2L1259.9,432.4L1266.9,434.4L1270.9,435.8L1275.1,437.5L1279.7,439.3L1284.3,441.3L1289.2,443.5L1294.1,445.8L1299.1,448.1L1304.1,450.5L1309.1,452.9L1314.0,455.4L1318.8,457.8L1323.5,460.1L1328.3,462.6L1333.1,465.0L1337.9,467.5L1342.7,470.0L1347.5,472.6L1352.2,475.2L1357.0,477.9L1361.6,480.6L1366.2,483.4L1370.7,486.3L1375.3,489.5L1380.2,493.0L1385.1,496.7L1390.1,500.5L1394.9,504.4L1399.7,508.2L1404.1,511.8L1408.3,515.1L1412.1,518.0L1415.3,520.4L1418.0,522.1L1418.5,521.5L1416.2,519.3L1413.2,516.6L1409.7,513.5L1405.7,510.0L1401.2,506.3L1396.5,502.5L1391.5,498.6L1386.6,494.7L1381.6,491.0L1376.7,487.5L1372.1,484.3L1367.5,481.4L1362.9,478.5L1358.2,475.8L1353.4,473.1L1348.7,470.4L1343.8,467.8L1339.0,465.3L1334.2,462.8L1329.4,460.4L1324.6,458.0L1319.9,455.6L1315.0,453.2L1310.1,450.8L1305.1,448.3L1300.1,445.9L1295.1,443.6L1290.2,441.3L1285.3,439.1L1280.6,437.1L1276.0,435.2L1271.7,433.5L1267.6,432.1L1260.4,430.1L1253.5,428.8L1247.2,428.1L1241.5,427.8L1236.9,427.7L1233.4,427.7Z"/><path d="M1124.0,447.4L1127.5,447.5L1132.3,447.7L1138.0,447.8L1144.2,448.1L1150.7,448.5L1157.0,449.1L1162.9,450.0L1168.0,451.1L1173.4,452.5L1179.1,454.2L1184.7,455.9L1190.0,457.6L1194.8,459.1L1198.9,460.2L1202.0,460.9L1202.2,460.3L1199.3,459.0L1195.4,457.5L1190.6,455.7L1185.4,453.9L1179.7,452.1L1174.0,450.4L1168.5,448.9L1163.3,447.8L1157.3,446.9L1150.8,446.3L1144.3,445.9L1138.0,445.6L1132.3,445.5L1127.6,445.3L1124.0,445.2Z"/><path d="M1123.8,450.1L1126.9,450.7L1130.9,451.4L1135.6,452.2L1140.9,453.1L1146.6,454.1L1152.5,455.3L1158.6,456.4L1164.6,457.7L1170.4,459.1L1175.8,460.5L1180.5,461.8L1185.2,463.2L1189.9,464.7L1194.6,466.3L1199.4,467.9L1204.1,469.6L1208.8,471.3L1213.5,473.1L1218.3,474.9L1223.0,476.8L1227.7,478.6L1232.5,480.6L1237.4,482.7L1242.4,484.9L1247.5,487.1L1252.5,489.4L1257.5,491.6L1262.3,493.9L1267.0,496.1L1271.5,498.2L1275.8,500.2L1279.7,502.1L1286.5,505.3L1292.8,508.4L1298.6,511.2L1303.7,513.7L1308.0,515.6L1311.3,516.9L1311.7,516.3L1308.7,514.3L1304.6,512.0L1299.6,509.2L1293.9,506.2L1287.6,503.1L1280.8,499.9L1276.8,498.0L1272.6,496.0L1268.1,493.9L1263.4,491.7L1258.5,489.4L1253.5,487.2L1248.5,484.9L1243.4,482.6L1238.4,480.5L1233.4,478.4L1228.6,476.4L1223.9,474.5L1219.1,472.7L1214.4,470.8L1209.6,469.0L1204.9,467.3L1200.2,465.6L1195.4,464.0L1190.7,462.4L1185.9,460.9L1181.2,459.5L1176.4,458.1L1170.9,456.7L1165.1,455.4L1159.1,454.1L1153.0,452.9L1147.0,451.8L1141.3,450.7L1136.0,449.8L1131.3,449.0L1127.3,448.3L1124.2,447.7Z"/><path d="M1178.6,467.4L1181.4,468.8L1185.1,470.4L1189.5,472.1L1194.4,474.1L1199.8,476.1L1205.4,478.1L1211.2,480.2L1216.9,482.4L1222.5,484.5L1227.7,486.5L1232.4,488.3L1237.0,490.1L1241.7,492.0L1246.5,493.9L1251.2,495.9L1256.0,497.8L1260.7,499.8L1265.5,501.7L1270.3,503.6L1275.1,505.5L1279.8,507.3L1284.5,509.1L1289.2,510.8L1293.9,512.6L1298.5,514.3L1303.2,516.1L1307.9,517.7L1312.6,519.4L1317.4,521.0L1322.2,522.6L1327.1,524.1L1332.0,525.6L1337.3,527.0L1342.9,528.4L1348.9,529.9L1354.9,531.2L1361.0,532.6L1366.9,533.9L1372.5,535.0L1377.8,536.0L1382.4,536.8L1386.4,537.4L1389.5,537.8L1389.7,537.1L1386.7,536.0L1382.8,535.0L1378.2,533.9L1373.0,532.7L1367.4,531.5L1361.5,530.2L1355.5,528.9L1349.4,527.5L1343.5,526.1L1337.9,524.7L1332.7,523.2L1327.8,521.8L1322.9,520.3L1318.1,518.7L1313.4,517.1L1308.7,515.5L1304.0,513.8L1299.4,512.1L1294.7,510.3L1290.1,508.6L1285.4,506.8L1280.7,505.0L1275.9,503.2L1271.2,501.4L1266.4,499.5L1261.7,497.6L1256.9,495.6L1252.1,493.7L1247.4,491.7L1242.6,489.8L1237.9,487.9L1233.2,486.0L1228.6,484.2L1223.3,482.2L1217.7,480.1L1212.0,478.0L1206.2,475.8L1200.6,473.8L1195.2,471.8L1190.2,470.2L1185.7,468.7L1181.9,467.5L1178.8,466.8Z"/><path d="M1211.1,483.1L1213.8,484.4L1217.4,485.9L1221.7,487.7L1226.5,489.6L1231.7,491.5L1237.2,493.5L1242.8,495.5L1248.4,497.6L1253.8,499.5L1258.2,501.1L1262.7,502.7L1267.4,504.3L1272.1,505.9L1276.9,507.6L1281.7,509.3L1286.6,511.0L1291.4,512.7L1296.3,514.4L1301.1,516.1L1305.9,517.7L1310.6,519.4L1315.2,521.1L1319.7,522.7L1324.3,524.4L1328.8,526.1L1333.4,527.8L1338.1,529.4L1342.8,531.1L1347.7,532.7L1352.8,534.4L1358.0,536.0L1362.8,537.4L1368.0,538.8L1373.5,540.3L1379.3,541.8L1385.1,543.4L1391.0,544.9L1396.7,546.3L1402.3,547.7L1407.5,549.0L1412.4,550.0L1416.7,550.9L1420.4,551.7L1423.4,552.1L1423.6,551.4L1420.7,550.3L1417.1,549.2L1412.9,548.0L1408.1,546.7L1402.9,545.3L1397.3,544.0L1391.6,542.5L1385.7,541.0L1379.9,539.5L1374.2,538.0L1368.6,536.5L1363.5,535.0L1358.7,533.7L1353.5,532.1L1348.5,530.4L1343.6,528.8L1338.9,527.1L1334.2,525.5L1329.6,523.8L1325.1,522.1L1320.6,520.5L1316.0,518.8L1311.4,517.1L1306.7,515.4L1301.9,513.8L1297.1,512.1L1292.2,510.4L1287.4,508.7L1282.5,507.0L1277.7,505.3L1272.9,503.6L1268.2,502.0L1263.5,500.4L1259.0,498.8L1254.6,497.2L1249.2,495.3L1243.6,493.3L1238.0,491.2L1232.5,489.2L1227.3,487.4L1222.4,485.7L1218.0,484.3L1214.3,483.1L1211.4,482.4Z"/><path d="M1321.9,522.1L1325.0,522.9L1329.1,523.6L1334.0,524.4L1339.6,525.3L1345.6,526.2L1351.9,527.1L1358.2,528.1L1363.0,528.9L1368.4,529.8L1374.3,530.8L1380.4,531.9L1386.5,533.0L1392.4,534.0L1398.0,534.9L1403.0,535.6L1407.2,536.2L1410.4,536.4L1410.5,535.8L1407.4,534.9L1403.3,534.0L1398.3,533.0L1392.8,531.9L1386.9,530.8L1380.8,529.7L1374.7,528.7L1368.8,527.6L1363.4,526.7L1358.5,525.9L1352.2,524.9L1345.9,524.0L1339.9,523.1L1334.3,522.5L1329.3,522.0L1325.2,521.6L1322.0,521.5Z"/><path d="M1368.9,424.4L1373.1,423.7L1378.9,422.1L1384.6,420.8L1390.2,420.5L1396.0,420.4L1400.0,420.0L1400.1,419.4L1396.0,418.7L1390.2,418.3L1384.3,418.6L1378.3,420.0L1372.6,422.0L1368.7,423.8Z"/><path d="M1372.4,425.6L1373.2,429.1L1374.5,433.9L1376.2,439.6L1378.3,445.7L1380.7,451.8L1383.3,457.2L1385.8,461.6L1388.5,465.9L1391.4,470.2L1394.5,474.4L1397.7,478.5L1401.0,482.4L1404.4,486.2L1408.8,490.5L1413.7,494.9L1418.9,499.1L1423.8,502.7L1427.9,505.7L1431.1,507.8L1431.5,507.2L1428.9,504.5L1424.9,501.2L1420.3,497.3L1415.3,493.1L1410.4,488.8L1406.1,484.5L1402.8,480.8L1399.6,476.9L1396.4,472.9L1393.4,468.8L1390.6,464.6L1387.9,460.4L1385.5,456.1L1382.9,450.8L1380.5,444.9L1378.3,438.9L1376.3,433.3L1374.6,428.6L1373.0,425.3Z"/><path d="M1431.0,513.8L1427.4,518.0L1422.7,523.7L1417.3,528.7L1412.2,534.2L1408.6,540.7L1406.8,547.8L1408.0,556.0L1410.1,562.2L1410.8,562.1L1409.7,555.7L1409.0,547.9L1410.7,541.5L1414.0,535.5L1418.9,530.2L1424.3,525.1L1428.7,519.0L1431.6,514.2Z"/><path d="M1334.7,521.5L1331.2,523.0L1326.3,525.5L1320.8,528.6L1315.3,532.3L1310.6,536.5L1307.4,540.2L1304.5,544.1L1301.9,548.3L1299.4,552.8L1297.0,557.7L1294.7,562.9L1292.8,567.2L1290.9,571.8L1289.0,576.7L1287.1,581.7L1285.4,586.9L1283.9,592.1L1282.6,597.3L1281.6,602.3L1280.7,608.1L1280.2,614.1L1279.9,620.2L1279.9,626.1L1280.2,631.8L1280.7,637.1L1281.6,641.9L1283.9,648.8L1287.3,654.4L1291.1,659.0L1294.9,663.3L1299.1,667.4L1303.9,671.0L1308.1,673.9L1311.3,675.8L1311.7,675.1L1309.1,672.6L1305.1,669.4L1300.8,665.6L1296.8,661.5L1293.1,657.3L1289.5,652.9L1286.3,647.7L1284.1,641.2L1283.4,636.8L1282.8,631.7L1282.6,626.1L1282.6,620.2L1282.8,614.3L1283.4,608.4L1284.2,602.7L1285.1,597.8L1286.4,592.8L1287.9,587.7L1289.6,582.6L1291.5,577.6L1293.4,572.8L1295.2,568.2L1297.1,564.0L1299.4,558.8L1301.8,554.0L1304.2,549.6L1306.7,545.6L1309.4,541.8L1312.4,538.4L1316.9,534.4L1322.1,530.7L1327.4,527.3L1332.0,524.5L1335.1,522.1Z"/><path d="M1334.8,521.5L1330.6,523.2L1324.7,526.4L1318.5,531.3L1315.4,534.9L1312.3,539.0L1309.0,543.6L1305.9,548.3L1302.8,553.1L1300.1,557.6L1296.9,562.7L1293.9,567.8L1291.1,573.0L1288.7,578.3L1286.9,584.0L1285.9,589.0L1285.3,594.2L1285.0,599.6L1285.0,605.0L1285.2,610.3L1285.6,615.7L1286.1,620.9L1287.0,626.2L1288.1,631.5L1289.3,636.7L1290.7,642.0L1292.1,647.1L1293.7,652.6L1295.7,658.4L1297.7,664.3L1299.7,669.6L1301.4,674.1L1302.5,677.4L1304.8,676.6L1303.6,673.3L1302.0,668.8L1300.0,663.4L1298.0,657.7L1296.1,651.9L1294.4,646.5L1293.0,641.3L1291.7,636.2L1290.5,631.0L1289.4,625.8L1288.5,620.6L1288.0,615.4L1287.6,610.2L1287.4,604.9L1287.4,599.6L1287.7,594.4L1288.3,589.4L1289.2,584.6L1291.0,579.2L1293.3,574.0L1296.0,569.0L1299.0,564.0L1302.1,558.9L1304.9,554.4L1307.9,549.7L1311.0,544.9L1314.2,540.4L1317.3,536.4L1320.1,533.1L1325.9,528.0L1331.4,524.6L1335.1,522.1Z"/><path d="M1253.8,556.9L1253.2,560.5L1252.6,565.4L1252.0,571.2L1251.6,577.5L1251.5,583.8L1251.7,589.6L1252.3,594.9L1253.2,600.2L1254.2,605.5L1255.5,610.7L1256.8,615.9L1258.3,621.1L1259.8,626.4L1261.4,631.8L1263.2,637.2L1265.1,642.4L1266.9,647.6L1268.7,652.4L1271.0,658.2L1273.4,664.1L1275.7,669.6L1277.7,674.2L1279.1,677.5L1281.4,676.5L1279.9,673.2L1277.9,668.6L1275.6,663.2L1273.2,657.4L1271.0,651.6L1269.2,646.7L1267.4,641.6L1265.5,636.4L1263.8,631.0L1262.1,625.7L1260.6,620.4L1259.2,615.2L1257.8,610.1L1256.6,604.9L1255.5,599.8L1254.7,594.6L1254.1,589.4L1253.9,583.8L1254.0,577.6L1254.3,571.3L1254.5,565.5L1254.7,560.6L1254.6,557.0Z"/><path d="M1276.1,556.7L1272.6,559.8L1267.8,564.7L1263.7,570.7L1261.4,575.8L1259.5,581.5L1258.0,587.7L1257.0,594.6L1256.7,599.8L1256.6,605.5L1256.8,611.5L1257.1,617.6L1257.6,623.4L1258.3,628.7L1259.5,634.6L1261.0,640.0L1262.7,645.2L1264.4,650.1L1266.2,655.0L1268.6,661.4L1271.3,667.9L1273.7,673.5L1275.3,677.4L1277.4,676.6L1275.7,672.6L1273.3,667.0L1270.7,660.6L1268.3,654.2L1266.5,649.4L1264.7,644.5L1263.1,639.4L1261.6,634.1L1260.5,628.4L1259.8,623.1L1259.3,617.4L1259.0,611.4L1258.8,605.5L1258.9,599.9L1259.2,594.8L1260.2,588.1L1261.6,582.1L1263.5,576.6L1265.6,571.8L1269.3,565.9L1273.6,560.8L1276.6,557.2Z"/><path d="M1005.9,794.1L1008.9,791.9L1012.9,788.7L1017.5,784.8L1022.4,780.6L1027.3,776.5L1031.2,773.2L1035.1,769.7L1039.1,766.2L1043.4,762.7L1048.1,759.2L1053.2,755.7L1057.4,753.1L1062.1,750.4L1067.0,747.6L1072.0,744.8L1077.2,742.1L1082.3,739.5L1087.3,737.2L1092.1,735.0L1097.6,732.8L1103.4,730.7L1109.2,728.8L1114.8,727.1L1119.9,725.6L1124.2,724.3L1127.4,723.3L1126.6,721.0L1123.5,722.0L1119.2,723.2L1114.1,724.7L1108.5,726.5L1102.6,728.4L1096.7,730.5L1091.1,732.8L1086.3,735.0L1081.2,737.4L1076.1,740.0L1070.9,742.7L1065.8,745.5L1060.8,748.3L1056.2,751.0L1051.9,753.7L1046.7,757.2L1041.9,760.8L1037.6,764.4L1033.5,767.9L1029.6,771.3L1025.7,774.6L1020.9,778.7L1016.0,783.1L1011.6,787.2L1007.9,790.8L1005.4,793.5Z"/><path d="M1042.3,773.3L1045.6,771.4L1050.0,768.6L1055.1,765.3L1060.6,761.7L1066.2,758.4L1070.9,755.8L1076.0,753.1L1081.3,750.4L1086.7,747.8L1092.1,745.3L1097.3,742.8L1102.7,740.3L1108.5,737.8L1114.3,735.3L1119.7,733.1L1124.2,731.2L1127.5,729.8L1126.5,727.6L1123.3,729.0L1118.7,730.9L1113.4,733.1L1107.6,735.6L1101.7,738.1L1096.3,740.6L1091.0,743.1L1085.6,745.6L1080.2,748.3L1074.9,751.0L1069.7,753.6L1064.9,756.3L1059.3,759.7L1053.8,763.4L1048.9,767.0L1044.7,770.2L1041.9,772.7Z"/><path d="M1089.1,734.2L1093.0,733.6L1098.6,732.4L1104.8,731.0L1110.4,729.9L1116.9,728.8L1123.0,727.8L1127.2,727.1L1126.8,725.1L1122.7,725.8L1116.6,726.8L1110.1,727.9L1104.4,729.0L1098.1,730.5L1092.6,732.2L1088.9,733.6Z"/><path d="M1090.3,733.7L1094.6,734.1L1100.7,734.2L1107.1,734.5L1112.3,735.1L1118.0,736.0L1123.2,736.9L1126.8,737.6L1127.2,735.4L1123.6,734.8L1118.3,733.9L1112.6,732.9L1107.3,732.3L1100.7,732.0L1094.5,732.4L1090.3,733.0Z"/><path d="M729.6,1042.9L732.4,1043.1L735.7,1043.0L739.5,1042.9L743.7,1042.7L748.2,1042.5L753.1,1042.1L758.3,1041.7L763.7,1041.3L769.3,1040.9L775.1,1040.5L781.1,1040.1L787.1,1039.7L793.1,1039.3L799.2,1039.0L805.2,1038.7L809.8,1038.5L814.4,1038.2L819.3,1038.0L824.2,1037.8L829.2,1037.6L834.3,1037.3L839.5,1037.1L844.8,1036.9L850.1,1036.7L855.5,1036.5L860.9,1036.3L866.3,1036.1L871.7,1035.9L877.2,1035.7L882.6,1035.5L888.0,1035.4L893.4,1035.2L898.8,1035.1L904.1,1034.9L909.3,1034.8L914.5,1034.6L919.7,1034.5L924.9,1034.4L930.0,1034.3L935.1,1034.2L940.3,1034.1L945.4,1034.0L950.5,1034.0L955.7,1033.9L960.8,1033.8L966.0,1033.8L971.1,1033.7L976.3,1033.7L981.5,1033.6L986.8,1033.6L992.0,1033.6L997.3,1033.5L1002.7,1033.5L1008.0,1033.5L1013.5,1033.5L1018.5,1033.5L1023.9,1033.5L1029.4,1033.5L1035.1,1033.5L1040.9,1033.5L1046.8,1033.6L1052.8,1033.6L1058.8,1033.6L1064.8,1033.7L1070.8,1033.7L1076.7,1033.8L1082.5,1033.8L1088.2,1033.9L1093.7,1033.9L1098.9,1034.0L1104.0,1034.0L1108.7,1034.1L1113.1,1034.1L1117.2,1034.2L1120.9,1034.2L1124.2,1034.2L1127.0,1034.3L1127.0,1031.5L1124.2,1031.4L1120.9,1031.4L1117.2,1031.4L1113.2,1031.3L1108.7,1031.3L1104.0,1031.2L1099.0,1031.2L1093.7,1031.1L1088.2,1031.1L1082.6,1031.0L1076.8,1031.0L1070.8,1030.9L1064.9,1030.9L1058.8,1030.8L1052.8,1030.8L1046.8,1030.8L1040.9,1030.7L1035.1,1030.7L1029.4,1030.7L1023.9,1030.7L1018.5,1030.7L1013.5,1030.7L1008.0,1030.7L1002.7,1030.7L997.3,1030.7L992.0,1030.8L986.7,1030.8L981.5,1030.8L976.3,1030.9L971.1,1030.9L965.9,1031.0L960.8,1031.0L955.6,1031.1L950.5,1031.2L945.4,1031.2L940.2,1031.3L935.1,1031.4L929.9,1031.5L924.8,1031.6L919.6,1031.7L914.5,1031.8L909.3,1032.0L904.0,1032.1L898.7,1032.3L893.4,1032.4L888.0,1032.6L882.5,1032.7L877.1,1032.9L871.6,1033.1L866.2,1033.3L860.8,1033.5L855.4,1033.7L850.0,1033.9L844.7,1034.1L839.4,1034.3L834.2,1034.5L829.1,1034.8L824.1,1035.0L819.1,1035.2L814.3,1035.4L809.6,1035.7L805.1,1035.9L799.0,1036.2L793.0,1036.6L786.9,1036.9L780.9,1037.3L774.9,1037.7L769.1,1038.1L763.5,1038.5L758.1,1038.9L752.9,1039.3L748.0,1039.7L743.5,1040.2L739.3,1040.6L735.6,1041.1L732.3,1041.5L729.6,1042.1Z"/><path d="M760.9,1040.2L763.7,1040.5L766.9,1040.6L770.6,1040.6L774.7,1040.6L779.2,1040.5L783.9,1040.4L789.0,1040.2L794.3,1040.1L799.7,1039.9L805.4,1039.8L811.2,1039.6L817.0,1039.4L822.9,1039.3L828.9,1039.1L834.8,1039.0L840.6,1038.8L846.3,1038.7L851.8,1038.6L857.2,1038.5L862.3,1038.4L867.3,1038.3L872.4,1038.3L877.6,1038.2L882.7,1038.1L887.9,1038.1L893.1,1038.1L898.3,1038.0L903.6,1038.0L908.8,1037.9L914.1,1037.9L919.3,1037.9L924.6,1037.9L929.9,1037.8L935.2,1037.8L940.4,1037.8L945.7,1037.8L950.9,1037.7L956.2,1037.7L961.4,1037.7L966.6,1037.7L972.0,1037.7L977.4,1037.7L982.9,1037.7L988.4,1037.6L994.0,1037.6L999.5,1037.6L1005.1,1037.6L1010.6,1037.6L1016.1,1037.6L1021.6,1037.6L1026.9,1037.7L1032.2,1037.7L1037.4,1037.7L1042.5,1037.7L1047.4,1037.7L1052.2,1037.7L1056.9,1037.7L1061.3,1037.7L1065.5,1037.7L1072.4,1037.7L1079.0,1037.7L1085.3,1037.8L1091.5,1037.8L1097.3,1037.8L1102.8,1037.8L1107.9,1037.9L1112.6,1037.9L1117.0,1037.9L1120.8,1037.9L1124.2,1038.0L1127.0,1038.0L1127.0,1035.6L1124.2,1035.5L1120.8,1035.5L1117.0,1035.5L1112.7,1035.5L1107.9,1035.4L1102.8,1035.4L1097.3,1035.4L1091.5,1035.4L1085.4,1035.3L1079.0,1035.3L1072.4,1035.3L1065.5,1035.3L1061.3,1035.3L1056.9,1035.3L1052.2,1035.3L1047.4,1035.3L1042.5,1035.3L1037.4,1035.2L1032.2,1035.2L1027.0,1035.2L1021.6,1035.2L1016.1,1035.2L1010.6,1035.2L1005.1,1035.2L999.5,1035.2L994.0,1035.2L988.4,1035.2L982.9,1035.2L977.4,1035.2L972.0,1035.3L966.6,1035.3L961.4,1035.3L956.2,1035.3L950.9,1035.3L945.7,1035.3L940.4,1035.4L935.1,1035.4L929.9,1035.4L924.6,1035.4L919.3,1035.5L914.1,1035.5L908.8,1035.5L903.5,1035.6L898.3,1035.6L893.1,1035.6L887.9,1035.7L882.7,1035.7L877.5,1035.8L872.4,1035.8L867.3,1035.9L862.2,1036.0L857.2,1036.1L851.8,1036.2L846.2,1036.3L840.5,1036.4L834.7,1036.5L828.8,1036.7L822.9,1036.8L817.0,1037.0L811.1,1037.2L805.3,1037.3L799.7,1037.5L794.2,1037.7L788.9,1037.8L783.9,1038.0L779.1,1038.1L774.6,1038.4L770.6,1038.6L766.9,1038.9L763.6,1039.1L760.8,1039.5Z"/><path d="M745.3,1055.8L748.2,1055.7L751.7,1055.3L755.7,1054.7L760.2,1054.1L765.2,1053.4L770.5,1052.5L776.0,1051.6L781.8,1050.8L787.6,1049.9L793.5,1049.0L799.4,1048.2L805.3,1047.5L810.0,1046.9L815.0,1046.3L820.1,1045.8L825.4,1045.2L830.9,1044.6L836.4,1044.0L842.0,1043.5L847.6,1042.9L853.1,1042.4L858.6,1041.8L863.9,1041.4L869.1,1040.9L874.1,1040.5L878.9,1040.0L883.3,1039.7L889.8,1039.2L896.2,1038.8L902.5,1038.4L908.5,1038.1L914.2,1037.9L919.5,1037.6L924.4,1037.3L928.7,1037.0L932.4,1036.8L935.3,1036.3L935.3,1035.6L932.3,1035.5L928.6,1035.5L924.3,1035.5L919.5,1035.5L914.1,1035.7L908.4,1035.9L902.4,1036.2L896.1,1036.6L889.7,1037.0L883.2,1037.5L878.7,1037.9L873.9,1038.3L868.9,1038.7L863.7,1039.2L858.4,1039.7L852.9,1040.2L847.4,1040.7L841.8,1041.3L836.2,1041.8L830.7,1042.4L825.2,1043.0L819.9,1043.6L814.7,1044.2L809.7,1044.7L805.0,1045.3L799.2,1046.0L793.2,1046.9L787.3,1047.7L781.4,1048.6L775.7,1049.5L770.1,1050.4L764.8,1051.2L759.9,1052.1L755.4,1052.9L751.4,1053.7L748.0,1054.4L745.2,1055.2Z"/><path d="M760.8,1041.5L763.7,1042.0L767.2,1042.3L771.3,1042.6L775.8,1042.9L780.8,1043.2L786.2,1043.5L791.7,1043.8L797.5,1044.0L803.3,1044.3L809.2,1044.7L814.9,1045.0L820.6,1045.4L826.0,1045.8L831.1,1046.2L836.5,1046.7L842.3,1047.3L848.2,1047.9L854.3,1048.6L860.4,1049.3L866.3,1050.0L872.2,1050.7L877.7,1051.4L883.0,1052.0L887.8,1052.5L892.1,1052.9L895.8,1053.2L898.8,1053.2L898.9,1052.6L896.0,1051.9L892.3,1051.3L888.0,1050.6L883.3,1049.9L878.0,1049.2L872.4,1048.5L866.6,1047.8L860.6,1047.1L854.5,1046.4L848.5,1045.7L842.5,1045.1L836.7,1044.5L831.3,1044.0L826.1,1043.6L820.7,1043.2L815.1,1042.8L809.3,1042.5L803.4,1042.2L797.6,1041.8L791.8,1041.6L786.3,1041.3L780.9,1041.0L775.9,1040.9L771.4,1040.8L767.3,1040.7L763.7,1040.7L760.9,1040.9Z"/><path d="M945.8,1050.6L948.8,1050.7L952.4,1050.4L956.6,1050.1L961.4,1049.8L966.5,1049.3L972.0,1048.8L977.7,1048.2L983.7,1047.6L989.7,1047.0L995.8,1046.4L1001.9,1045.9L1007.8,1045.4L1013.5,1044.9L1018.5,1044.5L1023.8,1044.1L1029.2,1043.7L1034.7,1043.3L1040.4,1042.9L1046.1,1042.5L1051.8,1042.1L1057.4,1041.8L1063.0,1041.4L1068.4,1041.1L1073.6,1040.8L1078.6,1040.5L1083.3,1040.2L1087.7,1039.9L1091.6,1039.7L1099.2,1039.3L1105.9,1039.0L1111.6,1038.8L1116.6,1038.6L1120.7,1038.5L1124.2,1038.5L1127.0,1038.4L1127.0,1036.2L1124.1,1036.3L1120.7,1036.3L1116.5,1036.4L1111.6,1036.6L1105.8,1036.8L1099.1,1037.1L1091.5,1037.5L1087.5,1037.7L1083.2,1038.0L1078.5,1038.3L1073.5,1038.6L1068.3,1038.9L1062.8,1039.2L1057.3,1039.6L1051.6,1040.0L1045.9,1040.3L1040.2,1040.7L1034.6,1041.1L1029.0,1041.5L1023.6,1041.9L1018.4,1042.3L1013.4,1042.7L1007.6,1043.2L1001.7,1043.7L995.6,1044.2L989.5,1044.8L983.5,1045.4L977.5,1046.0L971.8,1046.6L966.3,1047.1L961.1,1047.7L956.4,1048.3L952.3,1048.9L948.6,1049.4L945.7,1050.0Z"/><path d="M909.3,1036.9L912.2,1037.1L915.5,1037.2L919.2,1037.3L923.3,1037.3L927.8,1037.3L932.6,1037.2L937.7,1037.1L943.0,1037.0L948.6,1036.9L954.3,1036.7L960.2,1036.6L966.1,1036.5L972.2,1036.4L978.3,1036.3L984.3,1036.2L990.4,1036.1L996.3,1036.0L1002.2,1036.0L1007.9,1035.9L1013.5,1035.9L1018.5,1035.9L1023.9,1035.9L1029.4,1035.9L1035.1,1035.9L1040.9,1035.9L1046.8,1035.9L1052.8,1036.0L1058.8,1036.0L1064.8,1036.1L1070.8,1036.1L1076.7,1036.2L1082.5,1036.2L1088.2,1036.3L1093.7,1036.3L1098.9,1036.4L1104.0,1036.4L1108.7,1036.5L1113.1,1036.5L1117.2,1036.6L1120.9,1036.6L1124.2,1036.6L1127.0,1036.7L1127.0,1034.2L1124.2,1034.2L1120.9,1034.2L1117.2,1034.2L1113.2,1034.1L1108.7,1034.1L1104.0,1034.0L1099.0,1034.0L1093.7,1033.9L1088.2,1033.9L1082.6,1033.8L1076.8,1033.7L1070.8,1033.7L1064.9,1033.6L1058.8,1033.6L1052.8,1033.6L1046.8,1033.5L1040.9,1033.5L1035.1,1033.5L1029.4,1033.4L1023.9,1033.4L1018.5,1033.4L1013.5,1033.5L1007.9,1033.5L1002.2,1033.6L996.3,1033.6L990.3,1033.7L984.3,1033.8L978.2,1033.9L972.1,1034.0L966.1,1034.1L960.1,1034.2L954.3,1034.3L948.5,1034.4L943.0,1034.6L937.6,1034.7L932.6,1034.8L927.8,1034.9L923.3,1035.1L919.2,1035.3L915.4,1035.5L912.1,1035.7L909.3,1036.1Z"/><path d="M909.3,1041.5L912.3,1041.7L915.8,1041.7L919.9,1041.6L924.6,1041.6L929.6,1041.5L935.0,1041.3L940.6,1041.1L946.5,1040.9L952.5,1040.6L958.5,1040.4L964.6,1040.2L970.6,1040.1L976.4,1039.9L982.1,1039.7L987.4,1039.6L992.8,1039.4L998.5,1039.3L1004.3,1039.2L1010.3,1039.1L1016.4,1039.0L1022.4,1038.9L1028.4,1038.8L1034.3,1038.7L1039.9,1038.6L1045.3,1038.6L1050.3,1038.4L1054.9,1038.3L1059.0,1038.1L1062.6,1037.9L1065.5,1037.6L1065.5,1037.0L1062.6,1036.8L1059.0,1036.7L1054.9,1036.6L1050.3,1036.6L1045.3,1036.6L1039.9,1036.7L1034.3,1036.7L1028.4,1036.8L1022.4,1036.9L1016.3,1037.0L1010.3,1037.1L1004.3,1037.2L998.4,1037.3L992.8,1037.5L987.4,1037.6L982.0,1037.7L976.4,1037.9L970.5,1038.1L964.5,1038.3L958.4,1038.5L952.4,1038.7L946.4,1038.9L940.5,1039.1L934.9,1039.3L929.5,1039.5L924.5,1039.7L919.9,1040.0L915.8,1040.2L912.2,1040.5L909.3,1040.9Z"/><path d="M1091.9,1010.0L1093.3,1005.4L1095.0,998.8L1097.8,992.2L1100.9,987.7L1104.8,983.0L1109.1,978.4L1113.2,974.3L1118.6,969.1L1124.0,964.5L1127.7,961.3L1126.3,959.6L1122.5,962.8L1117.2,967.5L1111.6,972.7L1107.5,976.9L1103.2,981.5L1099.1,986.4L1095.8,991.2L1093.1,998.2L1091.8,1005.0L1091.3,1009.9Z"/><path d="M1091.6,1009.0L1096.3,1010.0L1103.1,1010.8L1109.9,1011.0L1116.4,1010.4L1122.8,1009.2L1127.2,1008.4L1126.8,1006.3L1122.4,1007.1L1116.1,1008.2L1109.8,1008.8L1103.2,1008.6L1096.4,1008.2L1091.6,1008.3Z"/><path d="M1124.3,723.3L1127.4,722.5L1131.4,721.3L1136.1,720.0L1141.4,718.5L1147.1,716.8L1153.1,715.2L1159.1,713.5L1165.1,711.9L1170.9,710.4L1176.4,709.0L1181.6,707.8L1186.8,706.7L1192.0,705.5L1197.2,704.5L1202.4,703.4L1207.6,702.4L1212.8,701.4L1218.0,700.5L1223.2,699.5L1228.4,698.6L1233.7,697.7L1239.3,696.8L1245.0,695.8L1250.7,694.9L1256.3,694.0L1261.8,693.2L1267.1,692.4L1272.0,691.8L1276.4,691.2L1280.3,690.8L1288.1,690.4L1293.8,690.7L1298.0,691.2L1301.0,691.3L1301.1,690.6L1298.2,689.8L1294.0,688.9L1288.2,688.3L1280.2,688.4L1276.2,688.8L1271.7,689.4L1266.8,690.0L1261.5,690.8L1256.0,691.6L1250.3,692.5L1244.6,693.4L1238.9,694.4L1233.3,695.3L1228.0,696.2L1222.7,697.2L1217.5,698.1L1212.3,699.1L1207.1,700.0L1201.9,701.1L1196.7,702.1L1191.5,703.2L1186.2,704.3L1181.0,705.5L1175.8,706.7L1170.3,708.0L1164.5,709.5L1158.5,711.1L1152.4,712.8L1146.5,714.5L1140.8,716.1L1135.5,717.6L1130.7,719.0L1126.8,720.1L1123.7,721.0Z"/><path d="M1124.5,730.0L1127.5,728.9L1131.5,727.3L1136.3,725.5L1141.6,723.5L1147.2,721.4L1152.9,719.3L1158.4,717.4L1163.5,715.7L1168.4,714.2L1173.2,712.7L1178.1,711.2L1183.0,709.9L1187.8,708.6L1192.7,707.4L1197.5,706.3L1202.4,705.3L1207.9,704.4L1213.5,703.6L1219.0,703.0L1224.6,702.5L1230.1,702.1L1235.7,701.7L1241.3,701.4L1246.8,701.2L1252.4,701.0L1257.9,700.9L1263.5,700.9L1269.1,700.9L1274.6,701.1L1280.2,701.4L1285.8,701.9L1291.4,702.4L1297.1,703.0L1302.7,703.8L1308.3,704.6L1313.7,705.6L1319.0,706.6L1324.1,707.8L1329.1,709.0L1333.9,710.3L1338.7,711.7L1343.4,713.3L1348.0,715.0L1352.6,716.9L1357.2,719.1L1361.8,721.3L1366.3,723.7L1370.8,726.3L1375.2,729.1L1379.4,732.0L1383.6,735.0L1387.6,738.2L1391.4,741.6L1395.2,745.2L1398.9,749.0L1402.5,752.8L1406.0,756.8L1409.4,760.8L1412.7,765.0L1415.9,769.2L1419.0,773.6L1422.0,778.1L1424.9,782.6L1427.6,787.2L1430.1,791.8L1432.4,796.5L1434.6,801.3L1436.7,806.2L1438.6,811.1L1440.2,815.9L1441.7,820.7L1443.0,825.4L1444.1,830.7L1445.0,835.8L1445.5,840.9L1445.8,846.0L1445.8,851.1L1445.5,856.2L1445.0,861.3L1444.1,866.5L1443.0,871.7L1441.5,876.9L1439.8,882.0L1437.8,887.0L1435.5,891.9L1432.9,896.9L1429.9,901.8L1426.8,906.5L1423.4,911.0L1419.8,915.3L1416.1,919.2L1412.2,922.9L1408.1,926.3L1403.8,929.6L1399.1,932.8L1394.1,935.8L1389.5,938.4L1384.6,940.8L1379.5,943.2L1374.2,945.5L1368.8,947.6L1363.4,949.5L1358.0,951.3L1352.5,952.9L1347.0,954.5L1341.5,955.9L1335.9,957.1L1330.3,958.0L1324.8,958.7L1319.3,959.1L1313.6,959.1L1307.8,959.0L1302.0,958.6L1296.3,957.9L1290.8,956.9L1285.5,955.6L1280.8,954.0L1275.7,951.6L1271.0,948.7L1266.7,945.4L1262.6,941.7L1258.8,937.7L1255.3,933.6L1252.1,929.1L1249.2,924.5L1246.5,919.5L1244.1,914.2L1241.9,908.6L1239.9,902.7L1238.5,898.0L1237.2,892.9L1236.0,887.6L1234.9,882.1L1234.0,876.6L1233.2,871.2L1232.6,866.1L1232.2,861.4L1231.9,855.6L1232.0,850.2L1232.3,845.0L1232.9,840.1L1233.7,835.3L1234.7,830.6L1236.2,825.0L1238.0,819.6L1240.2,814.4L1242.5,809.5L1245.0,805.0L1248.8,799.5L1253.1,794.3L1257.1,789.7L1259.7,786.3L1259.1,785.7L1255.8,788.5L1251.4,792.7L1246.6,797.8L1242.6,803.5L1240.0,808.2L1237.6,813.2L1235.4,818.6L1233.5,824.2L1232.0,829.9L1231.0,834.8L1230.2,839.7L1229.5,844.8L1229.2,850.1L1229.1,855.7L1229.4,861.6L1229.8,866.4L1230.4,871.6L1231.2,877.0L1232.2,882.6L1233.3,888.1L1234.5,893.6L1235.8,898.8L1237.3,903.6L1239.3,909.6L1241.5,915.3L1244.0,920.7L1246.7,925.9L1249.8,930.7L1253.1,935.3L1256.8,939.6L1260.7,943.7L1264.9,947.5L1269.4,951.0L1274.4,954.0L1279.7,956.5L1284.8,958.3L1290.2,959.6L1295.9,960.6L1301.8,961.4L1307.7,961.8L1313.6,961.9L1319.4,961.9L1325.0,961.5L1330.8,960.8L1336.5,959.8L1342.1,958.6L1347.8,957.2L1353.3,955.6L1358.8,954.0L1364.3,952.2L1369.8,950.2L1375.3,948.1L1380.6,945.8L1385.9,943.4L1390.8,940.8L1395.5,938.2L1400.6,935.1L1405.4,931.9L1409.9,928.5L1414.1,924.9L1418.1,921.2L1421.9,917.1L1425.6,912.8L1429.1,908.1L1432.3,903.3L1435.3,898.3L1438.0,893.2L1440.4,888.1L1442.4,883.0L1444.2,877.7L1445.7,872.4L1446.8,867.1L1447.7,861.7L1448.3,856.4L1448.6,851.2L1448.6,845.9L1448.3,840.7L1447.7,835.5L1446.8,830.1L1445.7,824.7L1444.4,819.9L1442.9,815.0L1441.2,810.1L1439.3,805.1L1437.2,800.2L1434.9,795.3L1432.5,790.5L1430.0,785.9L1427.3,781.2L1424.4,776.6L1421.3,772.0L1418.1,767.6L1414.9,763.2L1411.5,759.1L1408.1,755.0L1404.6,751.0L1400.9,747.0L1397.2,743.2L1393.3,739.6L1389.4,736.1L1385.3,732.8L1381.1,729.7L1376.7,726.7L1372.2,723.9L1367.7,721.3L1363.1,718.8L1358.4,716.5L1353.7,714.4L1349.0,712.4L1344.3,710.7L1339.5,709.0L1334.7,707.6L1329.8,706.3L1324.8,705.0L1319.6,703.9L1314.3,702.8L1308.8,701.8L1303.1,701.0L1297.4,700.2L1291.7,699.6L1286.0,699.1L1280.3,698.6L1274.7,698.3L1269.1,698.1L1263.5,698.1L1257.9,698.1L1252.3,698.2L1246.7,698.4L1241.1,698.6L1235.5,698.9L1229.9,699.3L1224.3,699.7L1218.7,700.2L1213.1,700.9L1207.5,701.6L1201.9,702.6L1197.0,703.5L1192.0,704.6L1187.1,705.8L1182.2,707.2L1177.3,708.5L1172.4,710.0L1167.5,711.5L1162.6,713.0L1157.5,714.7L1151.9,716.7L1146.2,718.8L1140.6,720.9L1135.3,722.9L1130.5,724.7L1126.5,726.2L1123.5,727.4Z"/><path d="M1124.4,735.0L1127.2,734.0L1130.7,732.7L1134.9,731.2L1139.5,729.4L1144.6,727.5L1149.9,725.6L1155.4,723.6L1160.9,721.7L1166.3,719.9L1171.5,718.3L1176.4,716.8L1181.6,715.4L1186.8,714.1L1192.0,712.9L1197.2,711.7L1202.4,710.7L1207.6,709.7L1212.7,708.7L1217.9,707.9L1223.1,707.1L1228.3,706.5L1233.5,705.8L1238.7,705.2L1243.9,704.7L1249.1,704.2L1254.3,703.9L1259.5,703.6L1264.6,703.4L1269.8,703.4L1275.0,703.6L1280.2,703.9L1285.4,704.3L1290.7,705.0L1296.1,705.8L1301.5,706.7L1306.9,707.7L1312.2,708.9L1317.4,710.1L1322.4,711.4L1327.3,712.8L1332.0,714.2L1337.5,716.1L1342.7,718.0L1347.7,720.1L1352.5,722.3L1357.1,724.6L1361.7,727.1L1366.2,729.6L1370.8,732.3L1375.3,735.2L1379.8,738.2L1384.2,741.3L1388.6,744.6L1392.8,748.0L1396.9,751.4L1400.7,754.8L1404.4,758.2L1408.4,762.1L1412.1,766.0L1415.7,769.9L1419.0,774.0L1422.1,778.0L1425.0,782.3L1427.6,786.6L1430.1,791.1L1432.4,795.7L1434.4,800.4L1436.3,805.3L1437.9,810.2L1439.3,815.1L1440.5,820.1L1441.5,825.1L1442.3,830.3L1442.9,835.5L1443.3,840.8L1443.4,846.0L1443.4,851.2L1443.1,856.2L1442.5,862.0L1441.7,867.7L1440.5,873.3L1439.1,878.8L1437.4,884.3L1435.4,889.7L1433.5,894.3L1431.4,899.0L1429.2,903.6L1426.7,908.1L1423.9,912.4L1420.8,916.6L1417.4,920.6L1414.0,923.9L1410.3,927.1L1406.2,930.2L1402.0,933.3L1397.5,936.1L1393.0,938.8L1388.4,941.4L1383.9,943.7L1379.3,945.9L1374.6,947.9L1369.7,949.7L1364.8,951.3L1359.9,952.8L1354.9,954.2L1350.0,955.5L1345.1,956.7L1339.5,957.9L1333.7,959.1L1328.0,960.1L1322.3,961.0L1316.8,961.5L1311.4,961.9L1306.3,961.9L1300.7,961.5L1295.2,960.8L1290.0,959.8L1285.0,958.3L1280.2,956.5L1275.6,954.2L1271.3,951.4L1267.1,948.2L1263.2,944.5L1259.5,940.4L1255.9,935.9L1252.6,931.2L1249.9,926.7L1247.3,921.9L1244.8,916.7L1242.6,911.4L1240.5,905.9L1238.7,900.5L1237.2,895.1L1236.0,889.4L1235.1,883.1L1234.5,876.6L1234.0,870.4L1233.5,864.6L1233.1,859.8L1232.4,856.3L1231.7,856.3L1231.6,859.9L1231.6,864.7L1231.7,870.5L1232.1,876.8L1232.7,883.4L1233.6,889.8L1234.8,895.6L1236.4,901.2L1238.2,906.7L1240.3,912.3L1242.6,917.7L1245.1,923.0L1247.8,927.9L1250.6,932.5L1254.0,937.4L1257.6,942.0L1261.5,946.2L1265.6,950.0L1269.9,953.4L1274.4,956.3L1279.2,958.7L1284.2,960.6L1289.4,962.1L1294.8,963.2L1300.4,963.9L1306.3,964.3L1311.5,964.3L1317.0,964.0L1322.6,963.4L1328.4,962.5L1334.2,961.5L1340.0,960.3L1345.6,959.0L1350.6,957.8L1355.6,956.6L1360.6,955.2L1365.6,953.6L1370.6,952.0L1375.5,950.1L1380.3,948.1L1385.0,945.9L1389.6,943.5L1394.2,940.9L1398.8,938.2L1403.3,935.3L1407.7,932.2L1411.8,929.0L1415.6,925.7L1419.2,922.2L1422.7,918.1L1425.9,913.8L1428.8,909.3L1431.3,904.7L1433.6,900.0L1435.7,895.3L1437.6,890.6L1439.7,885.1L1441.4,879.5L1442.9,873.8L1444.1,868.1L1444.9,862.3L1445.5,856.4L1445.8,851.2L1445.8,846.0L1445.7,840.7L1445.3,835.3L1444.7,830.0L1443.9,824.7L1442.9,819.6L1441.7,814.5L1440.2,809.5L1438.5,804.5L1436.7,799.5L1434.6,794.7L1432.3,790.0L1429.7,785.4L1427.0,780.9L1424.0,776.6L1420.9,772.4L1417.5,768.4L1413.9,764.4L1410.1,760.4L1406.1,756.5L1402.4,753.0L1398.4,749.5L1394.3,746.1L1390.0,742.7L1385.6,739.4L1381.2,736.2L1376.6,733.1L1372.0,730.3L1367.5,727.5L1362.9,724.9L1358.3,722.5L1353.5,720.1L1348.6,717.9L1343.6,715.8L1338.3,713.8L1332.7,711.9L1328.0,710.5L1323.1,709.1L1318.0,707.8L1312.7,706.5L1307.3,705.4L1301.9,704.3L1296.5,703.4L1291.0,702.6L1285.6,701.9L1280.3,701.4L1275.1,701.1L1269.8,701.0L1264.6,701.0L1259.4,701.2L1254.1,701.4L1248.9,701.8L1243.7,702.3L1238.5,702.8L1233.2,703.4L1228.0,704.0L1222.8,704.7L1217.6,705.5L1212.3,706.4L1207.1,707.3L1201.9,708.3L1196.7,709.4L1191.4,710.5L1186.2,711.8L1181.0,713.1L1175.8,714.5L1170.8,715.9L1165.5,717.6L1160.1,719.4L1154.5,721.3L1149.1,723.3L1143.7,725.3L1138.7,727.1L1134.0,728.9L1129.9,730.5L1126.4,731.8L1123.6,732.8Z"/><path d="M1423.2,783.6L1425.1,786.5L1428.0,790.4L1431.4,794.9L1434.9,799.8L1438.2,804.9L1440.7,809.9L1442.6,814.9L1444.1,820.4L1445.3,826.1L1446.3,831.8L1446.9,837.6L1447.1,843.3L1447.1,848.9L1446.6,854.5L1445.9,860.2L1444.9,865.8L1443.6,871.4L1442.0,876.8L1440.0,882.2L1437.6,887.6L1435.0,892.9L1432.1,898.1L1429.2,903.1L1426.5,907.8L1422.9,913.3L1419.1,918.8L1415.4,924.0L1412.2,928.3L1410.2,931.6L1410.7,932.0L1413.3,929.2L1416.8,925.0L1420.7,920.1L1424.7,914.6L1428.3,909.0L1431.1,904.2L1434.0,899.2L1436.9,893.9L1439.6,888.5L1442.0,883.0L1444.1,877.5L1445.7,871.9L1447.0,866.3L1448.1,860.5L1448.8,854.8L1449.2,849.0L1449.3,843.3L1449.0,837.5L1448.4,831.6L1447.5,825.7L1446.2,819.9L1444.7,814.3L1442.7,809.0L1440.1,803.8L1436.7,798.6L1433.0,793.7L1429.3,789.3L1426.1,785.7L1423.7,783.2Z"/><path d="M1238.3,908.5L1239.9,911.6L1242.1,915.8L1244.7,920.7L1247.8,926.0L1251.3,931.3L1254.9,936.2L1258.7,940.3L1262.7,943.8L1266.9,946.9L1271.3,949.8L1275.9,952.4L1280.6,954.8L1285.5,956.9L1290.3,958.8L1295.4,960.4L1300.6,961.9L1306.0,963.1L1311.4,964.0L1316.8,964.7L1322.1,965.1L1327.1,965.4L1333.1,965.1L1339.2,964.3L1345.2,963.0L1350.6,961.7L1355.2,960.4L1358.4,959.4L1358.3,958.9L1354.9,959.3L1350.3,960.2L1344.8,961.3L1338.9,962.3L1332.9,963.1L1327.1,963.4L1322.2,963.2L1317.0,962.7L1311.7,962.0L1306.4,961.1L1301.1,959.9L1295.9,958.6L1291.0,956.9L1286.2,955.1L1281.5,953.0L1276.8,950.7L1272.3,948.1L1268.0,945.3L1263.9,942.2L1260.1,938.9L1256.5,934.9L1252.9,930.2L1249.5,925.0L1246.3,919.8L1243.4,915.0L1240.9,911.0L1238.8,908.2Z"/><path d="M1274.3,674.8L1276.7,677.1L1280.2,680.5L1284.6,684.3L1290.1,688.0L1294.4,690.3L1299.3,692.8L1304.7,695.4L1310.3,697.7L1316.1,699.7L1321.7,701.1L1327.7,701.9L1334.3,702.1L1340.8,701.9L1346.9,701.4L1352.1,700.9L1355.8,700.4L1355.8,699.7L1352.0,699.5L1346.8,699.7L1340.8,699.8L1334.3,699.9L1327.9,699.7L1322.1,699.0L1316.7,697.6L1311.1,695.6L1305.6,693.3L1300.3,690.9L1295.5,688.4L1291.2,686.1L1286.0,682.6L1281.6,678.9L1278.2,675.6L1275.8,673.2Z"/><path d="M1302.9,674.6L1305.4,678.1L1309.1,683.0L1313.4,687.8L1318.9,691.9L1325.1,695.5L1329.6,697.7L1329.9,697.2L1325.9,694.1L1320.1,690.3L1314.8,686.3L1310.6,681.8L1307.0,676.9L1304.5,673.4Z"/><path d="M1123.6,737.6L1126.9,738.9L1131.5,740.7L1137.0,742.8L1143.1,745.3L1149.6,748.0L1153.9,749.9L1158.6,752.0L1163.6,754.2L1168.7,756.5L1173.9,758.9L1179.1,761.3L1184.0,763.8L1188.5,766.2L1193.5,769.0L1198.4,771.9L1203.2,774.8L1207.8,777.7L1212.1,780.7L1216.0,783.8L1219.5,786.8L1223.7,791.3L1227.2,796.0L1230.2,800.7L1232.7,805.4L1234.9,809.9L1237.0,815.6L1238.6,821.5L1239.8,826.7L1240.8,830.3L1241.5,830.2L1241.2,826.4L1240.5,821.1L1239.2,815.0L1237.1,809.0L1234.8,804.3L1232.3,799.5L1229.2,794.6L1225.6,789.8L1221.2,785.1L1217.5,781.9L1213.5,778.8L1209.1,775.7L1204.5,772.7L1199.7,769.8L1194.7,766.9L1189.7,764.1L1185.1,761.6L1180.1,759.1L1175.0,756.7L1169.7,754.3L1164.6,752.0L1159.6,749.8L1154.8,747.7L1150.5,745.8L1144.0,743.0L1137.9,740.6L1132.4,738.4L1127.8,736.7L1124.4,735.4Z"/><path d="M1194.4,770.7L1197.6,770.0L1202.0,768.9L1207.2,767.4L1212.8,765.8L1218.4,764.1L1223.8,762.4L1228.5,761.0L1234.3,759.2L1239.7,757.5L1244.9,755.9L1249.8,754.5L1254.5,753.2L1260.5,751.8L1266.4,750.5L1271.5,749.5L1275.1,748.5L1275.0,747.9L1271.3,748.2L1266.1,748.8L1260.1,749.8L1253.9,751.1L1249.2,752.3L1244.2,753.8L1239.1,755.4L1233.6,757.1L1227.8,758.9L1223.1,760.3L1217.8,762.0L1212.1,763.7L1206.6,765.5L1201.5,767.3L1197.2,768.8L1194.2,770.0Z"/><path d="M1202.3,766.8L1205.9,765.8L1210.8,764.1L1216.6,762.0L1222.6,759.7L1228.5,757.6L1233.7,756.0L1239.1,754.7L1244.0,753.7L1248.8,752.9L1253.9,752.5L1259.5,752.1L1264.6,752.0L1270.1,751.9L1275.8,752.1L1281.6,752.3L1287.4,752.8L1293.1,753.4L1298.7,754.3L1304.4,755.3L1310.1,756.6L1315.7,758.0L1321.3,759.5L1326.7,761.2L1332.2,763.0L1337.7,764.9L1343.1,767.0L1348.3,769.2L1353.2,771.6L1357.7,774.1L1362.6,777.2L1367.0,780.5L1371.0,784.0L1374.7,787.8L1378.2,792.0L1381.3,796.6L1384.2,801.7L1386.8,807.0L1389.0,812.4L1391.0,817.7L1392.7,822.8L1394.1,828.0L1395.2,833.1L1395.9,838.2L1396.1,843.3L1395.9,848.4L1395.2,853.7L1394.1,859.0L1392.7,864.0L1391.0,868.8L1388.5,874.4L1385.6,879.5L1382.1,884.4L1378.2,889.3L1374.7,893.2L1370.8,897.0L1366.6,900.8L1362.2,904.2L1357.7,907.2L1352.9,909.9L1347.8,912.3L1342.6,914.3L1337.2,916.1L1332.0,917.5L1326.8,918.8L1321.7,919.8L1316.6,920.5L1311.6,920.7L1306.5,920.1L1301.3,918.7L1295.9,916.7L1290.6,914.1L1285.6,911.0L1281.1,907.4L1277.9,904.0L1274.9,900.1L1272.1,895.8L1269.7,891.3L1267.6,886.6L1265.9,881.9L1264.6,877.1L1263.8,872.0L1263.3,866.8L1263.1,861.5L1263.2,856.2L1263.3,851.2L1263.8,845.2L1264.5,839.4L1265.5,833.7L1266.8,828.1L1268.5,822.9L1270.5,817.8L1272.9,812.9L1275.6,808.2L1278.4,803.8L1281.3,799.8L1284.8,795.1L1288.4,791.0L1292.2,787.4L1296.5,784.5L1301.7,782.4L1307.5,780.9L1313.6,780.0L1319.4,779.5L1325.1,779.6L1331.0,780.2L1336.3,780.9L1340.1,781.2L1340.2,780.4L1336.6,779.3L1331.4,778.1L1325.3,777.1L1319.3,776.8L1313.3,777.4L1307.0,778.3L1300.8,779.9L1295.3,782.2L1290.5,785.3L1286.5,789.1L1282.8,793.5L1279.2,798.2L1276.3,802.4L1273.4,806.9L1270.6,811.7L1268.1,816.8L1266.0,822.0L1264.3,827.4L1262.9,833.1L1261.9,839.0L1261.1,845.0L1260.7,851.0L1260.5,856.2L1260.5,861.5L1260.7,867.0L1261.2,872.4L1262.1,877.7L1263.4,882.7L1265.1,887.6L1267.3,892.5L1269.8,897.2L1272.7,901.6L1275.9,905.7L1279.4,909.3L1284.0,913.1L1289.3,916.4L1294.9,919.2L1300.5,921.3L1306.0,922.7L1311.4,923.3L1316.8,923.2L1322.1,922.4L1327.4,921.4L1332.7,920.1L1338.0,918.6L1343.4,916.8L1348.9,914.7L1354.1,912.3L1359.1,909.5L1363.8,906.3L1368.3,902.8L1372.6,899.0L1376.6,895.0L1380.2,891.0L1384.2,886.0L1387.8,880.9L1390.9,875.5L1393.5,869.8L1395.2,864.8L1396.7,859.6L1397.8,854.2L1398.5,848.7L1398.8,843.3L1398.5,837.9L1397.8,832.6L1396.7,827.3L1395.2,822.1L1393.5,816.8L1391.5,811.4L1389.2,805.9L1386.5,800.4L1383.6,795.2L1380.3,790.4L1376.7,786.1L1372.8,782.1L1368.7,778.5L1364.1,775.1L1359.1,771.8L1354.4,769.3L1349.4,766.8L1344.1,764.6L1338.6,762.5L1333.0,760.5L1327.5,758.7L1322.0,757.0L1316.4,755.4L1310.7,754.0L1304.9,752.8L1299.2,751.7L1293.4,750.8L1287.7,750.2L1281.8,749.7L1275.9,749.4L1270.1,749.3L1264.6,749.3L1259.4,749.5L1253.7,749.8L1248.5,750.3L1243.6,751.1L1238.5,752.1L1233.0,753.5L1227.7,755.1L1221.7,757.3L1215.7,759.7L1210.0,762.1L1205.3,764.3L1202.0,766.1Z"/><path d="M1293.3,768.1L1296.9,768.1L1301.9,767.7L1307.7,767.4L1313.7,767.2L1319.2,767.5L1324.3,768.4L1329.4,769.7L1334.6,771.3L1339.7,773.2L1344.9,775.3L1350.2,777.6L1355.7,780.2L1361.0,783.0L1366.1,786.1L1370.7,789.5L1375.0,793.1L1379.0,797.0L1382.7,801.1L1385.9,805.4L1388.6,809.9L1390.8,814.7L1392.4,819.7L1393.6,825.0L1394.4,830.3L1395.0,835.6L1395.4,840.8L1395.5,846.2L1395.3,851.6L1394.7,856.6L1393.8,861.2L1391.7,866.6L1388.8,871.8L1385.9,876.3L1384.1,879.5L1384.7,879.9L1387.1,877.0L1390.3,872.7L1393.6,867.5L1395.9,861.8L1396.9,857.0L1397.5,851.7L1397.7,846.3L1397.6,840.7L1397.2,835.4L1396.6,830.0L1395.7,824.6L1394.5,819.2L1392.8,813.9L1390.6,808.9L1387.8,804.2L1384.4,799.7L1380.6,795.4L1376.5,791.4L1372.1,787.7L1367.3,784.3L1362.1,781.1L1356.6,778.2L1351.1,775.6L1345.8,773.2L1340.5,771.1L1335.3,769.2L1330.0,767.5L1324.7,766.2L1319.4,765.4L1313.7,765.0L1307.6,765.4L1301.7,766.0L1296.7,766.8L1293.2,767.4Z"/><path d="M1340.2,779.1L1336.4,778.4L1331.0,777.7L1324.6,777.0L1317.9,776.6L1311.5,776.5L1306.1,777.0L1299.7,778.6L1294.2,780.9L1289.3,784.0L1284.7,787.7L1281.0,791.2L1277.4,795.1L1274.1,799.5L1271.2,804.2L1268.7,808.9L1266.9,813.8L1265.4,818.8L1264.4,824.0L1263.8,829.6L1263.4,835.4L1263.3,840.7L1263.3,846.3L1263.6,852.1L1264.1,858.1L1264.9,863.9L1266.0,869.6L1267.5,875.1L1269.2,880.7L1271.1,886.2L1273.5,891.5L1276.2,896.6L1279.3,901.3L1283.0,905.6L1287.2,909.7L1291.7,913.4L1296.4,916.8L1301.2,919.8L1305.7,922.5L1311.1,925.1L1316.6,927.1L1322.0,928.6L1327.3,929.7L1332.3,930.4L1338.5,930.4L1344.5,929.3L1349.7,928.0L1353.2,927.0L1353.1,926.2L1349.4,926.6L1344.2,927.4L1338.3,928.1L1332.4,928.0L1327.7,927.3L1322.6,926.3L1317.3,924.8L1312.1,922.8L1306.9,920.3L1302.4,917.8L1297.8,914.8L1293.2,911.5L1288.8,907.9L1284.7,904.0L1281.2,899.8L1278.2,895.4L1275.6,890.5L1273.4,885.3L1271.5,879.9L1269.8,874.5L1268.4,869.0L1267.3,863.5L1266.5,857.8L1266.0,852.0L1265.7,846.2L1265.7,840.7L1265.8,835.5L1266.2,829.8L1266.8,824.4L1267.8,819.4L1269.1,814.5L1270.9,809.9L1273.3,805.3L1276.1,800.9L1279.3,796.7L1282.7,792.8L1286.2,789.5L1290.7,786.0L1295.3,783.1L1300.4,780.9L1306.5,779.4L1311.6,778.9L1317.8,779.0L1324.4,779.3L1330.8,779.7L1336.2,779.9L1340.1,779.8Z"/><path d="M1280.1,807.1L1282.7,809.1L1286.3,811.5L1290.8,814.3L1295.6,817.3L1300.7,820.4L1305.6,823.5L1309.8,826.1L1314.1,828.9L1318.5,831.9L1323.0,834.9L1327.6,838.0L1332.2,841.1L1336.9,844.3L1341.1,847.1L1345.6,850.2L1350.3,853.3L1354.9,856.5L1359.4,859.6L1363.6,862.5L1367.4,865.2L1370.6,867.7L1376.9,872.8L1380.7,876.8L1383.4,880.3L1386.0,885.7L1385.9,889.6L1382.6,892.6L1376.5,894.2L1371.8,893.8L1366.1,892.3L1358.9,889.1L1355.2,887.0L1351.0,884.4L1346.6,881.4L1341.9,878.2L1337.1,874.9L1332.4,871.6L1327.8,868.3L1323.3,865.1L1318.7,861.8L1314.0,858.3L1309.4,854.9L1305.0,851.5L1300.7,848.2L1296.6,844.9L1292.0,841.1L1287.4,837.1L1282.9,833.2L1278.8,829.7L1275.4,826.7L1272.7,824.8L1272.2,825.3L1274.4,827.8L1277.6,831.0L1281.5,834.8L1285.8,838.9L1290.5,842.9L1295.1,846.8L1299.2,850.1L1303.5,853.4L1308.0,856.8L1312.6,860.3L1317.3,863.7L1321.9,867.1L1326.4,870.3L1331.0,873.5L1335.7,876.9L1340.5,880.2L1345.2,883.5L1349.7,886.4L1354.0,889.1L1357.8,891.2L1365.3,894.6L1371.4,896.2L1376.7,896.6L1383.7,894.8L1388.1,890.7L1388.4,885.1L1385.5,879.1L1382.5,875.2L1378.5,871.0L1372.2,865.8L1368.9,863.3L1365.0,860.5L1360.8,857.6L1356.3,854.5L1351.6,851.3L1347.0,848.2L1342.5,845.1L1338.2,842.3L1333.6,839.1L1328.9,836.0L1324.4,832.9L1319.9,829.9L1315.4,826.9L1311.1,824.1L1306.9,821.4L1302.0,818.3L1296.9,815.2L1291.9,812.4L1287.3,809.9L1283.4,807.8L1280.4,806.5Z"/><path d="M1324.2,785.9L1322.7,790.5L1321.0,797.4L1320.8,804.3L1322.3,809.3L1324.7,814.3L1327.8,819.0L1331.6,823.2L1336.2,827.0L1341.6,830.5L1347.3,833.3L1352.9,835.2L1359.0,836.1L1365.4,836.1L1371.1,835.4L1374.9,833.4L1374.7,829.3L1371.1,824.7L1367.1,819.2L1364.8,815.0L1362.1,809.9L1359.2,804.6L1356.4,799.7L1353.9,795.8L1348.9,790.5L1345.6,788.3L1345.1,788.8L1348.0,791.5L1352.4,797.0L1354.6,800.8L1357.3,805.7L1360.1,811.0L1362.9,816.1L1365.3,820.4L1369.4,826.0L1372.7,830.3L1373.1,832.3L1370.5,833.2L1365.3,834.0L1359.1,833.9L1353.4,833.1L1348.1,831.3L1342.6,828.6L1337.5,825.2L1333.1,821.6L1329.6,817.7L1326.6,813.2L1324.4,808.5L1323.0,804.1L1322.9,797.6L1324.1,790.9L1324.8,786.1Z"/><path d="M1358.2,739.3L1361.0,742.0L1365.2,745.5L1370.2,749.6L1375.4,753.7L1380.1,757.5L1383.8,760.6L1390.8,766.9L1394.6,770.5L1395.0,770.2L1391.7,766.0L1385.0,759.3L1381.2,756.1L1376.5,752.3L1371.3,748.2L1366.2,744.3L1361.8,741.0L1358.5,738.9Z"/><path d="M1363.4,754.9L1365.3,758.5L1368.4,763.5L1372.0,769.1L1375.6,774.4L1378.5,778.7L1383.5,785.2L1386.8,788.7L1387.2,788.4L1384.6,784.4L1379.9,777.7L1377.1,773.4L1373.5,768.1L1369.8,762.6L1366.4,757.8L1363.8,754.6Z"/><path d="M1420.7,807.0L1423.5,810.0L1426.6,812.7L1429.7,815.3L1432.9,817.9L1436.3,820.0L1436.7,819.6L1433.9,816.6L1430.8,813.9L1427.7,811.3L1424.5,808.8L1421.0,806.6Z"/><path d="M1225.6,795.4L1229.7,795.7L1233.8,795.8L1237.9,795.6L1242.0,795.5L1246.0,795.4L1250.1,795.2L1254.2,794.6L1254.2,794.0L1250.1,793.7L1246.0,793.7L1241.9,793.8L1237.8,793.9L1233.7,794.0L1229.6,794.3L1225.6,794.8Z"/><path d="M1124.0,1031.9L1127.0,1031.8L1130.5,1031.8L1134.6,1031.7L1139.2,1031.6L1144.3,1031.5L1149.6,1031.4L1155.3,1031.3L1161.1,1031.3L1167.1,1031.2L1173.2,1031.1L1179.3,1030.9L1185.3,1030.8L1191.1,1030.8L1196.8,1030.7L1202.1,1030.6L1207.4,1030.5L1212.7,1030.4L1218.1,1030.3L1223.5,1030.2L1229.0,1030.1L1234.4,1030.0L1239.8,1030.0L1245.2,1029.9L1250.5,1029.8L1255.8,1029.7L1260.9,1029.6L1266.0,1029.5L1270.9,1029.4L1275.7,1029.4L1280.3,1029.3L1286.5,1029.1L1292.7,1029.0L1299.0,1028.9L1305.1,1028.7L1311.0,1028.6L1316.6,1028.5L1321.8,1028.3L1326.6,1028.1L1330.9,1027.8L1334.6,1027.6L1337.5,1027.2L1337.5,1026.5L1334.5,1026.3L1330.9,1026.2L1326.6,1026.2L1321.8,1026.2L1316.5,1026.3L1310.9,1026.4L1305.0,1026.5L1298.9,1026.7L1292.7,1026.8L1286.4,1026.9L1280.2,1027.1L1275.6,1027.2L1270.9,1027.2L1265.9,1027.3L1260.9,1027.4L1255.7,1027.5L1250.5,1027.6L1245.2,1027.7L1239.8,1027.8L1234.4,1027.8L1228.9,1027.9L1223.5,1028.0L1218.1,1028.1L1212.7,1028.2L1207.4,1028.3L1202.1,1028.4L1196.7,1028.5L1191.1,1028.6L1185.2,1028.7L1179.2,1028.8L1173.2,1028.9L1167.1,1029.0L1161.1,1029.1L1155.3,1029.1L1149.6,1029.2L1144.2,1029.3L1139.2,1029.4L1134.6,1029.5L1130.5,1029.6L1126.9,1029.6L1124.0,1029.7Z"/><path d="M1123.9,1036.0L1126.9,1036.1L1130.4,1036.3L1134.6,1036.5L1139.2,1036.8L1144.2,1037.1L1149.6,1037.3L1155.2,1037.6L1161.1,1037.9L1167.1,1038.2L1173.1,1038.6L1179.2,1038.9L1185.2,1039.1L1191.0,1039.4L1196.7,1039.7L1202.1,1039.9L1207.3,1040.1L1212.5,1040.3L1217.7,1040.5L1222.9,1040.7L1228.1,1040.8L1233.3,1041.0L1238.5,1041.1L1243.8,1041.3L1249.0,1041.4L1254.2,1041.6L1259.4,1041.8L1264.6,1041.9L1269.8,1042.1L1275.0,1042.3L1280.2,1042.5L1285.4,1042.7L1290.6,1042.9L1295.8,1043.2L1301.0,1043.4L1306.2,1043.6L1311.4,1043.8L1316.6,1044.1L1321.9,1044.3L1327.1,1044.6L1332.3,1044.9L1337.5,1045.1L1342.7,1045.4L1347.9,1045.8L1353.1,1046.1L1358.3,1046.4L1363.5,1046.8L1368.9,1047.2L1374.2,1047.6L1379.6,1048.0L1385.1,1048.4L1390.5,1048.9L1395.9,1049.3L1401.3,1049.8L1406.6,1050.3L1411.9,1050.7L1417.0,1051.2L1422.1,1051.7L1427.0,1052.1L1431.8,1052.5L1436.4,1052.9L1442.6,1053.5L1448.8,1054.0L1455.1,1054.6L1461.2,1055.1L1467.1,1055.7L1472.7,1056.2L1477.9,1056.6L1482.8,1056.9L1487.1,1057.2L1490.7,1057.3L1493.8,1057.2L1493.8,1056.4L1490.9,1055.8L1487.2,1055.2L1483.0,1054.7L1478.2,1054.1L1472.9,1053.6L1467.3,1053.0L1461.4,1052.5L1455.3,1051.9L1449.1,1051.4L1442.8,1050.8L1436.6,1050.3L1432.0,1049.9L1427.2,1049.5L1422.3,1049.0L1417.3,1048.6L1412.1,1048.1L1406.9,1047.7L1401.5,1047.2L1396.2,1046.7L1390.7,1046.3L1385.3,1045.8L1379.9,1045.4L1374.4,1044.9L1369.0,1044.5L1363.7,1044.1L1358.5,1043.8L1353.3,1043.4L1348.0,1043.1L1342.8,1042.8L1337.6,1042.5L1332.4,1042.2L1327.2,1042.0L1322.0,1041.7L1316.8,1041.5L1311.6,1041.2L1306.4,1041.0L1301.1,1040.7L1295.9,1040.5L1290.7,1040.3L1285.5,1040.1L1280.3,1039.9L1275.1,1039.7L1269.9,1039.5L1264.7,1039.3L1259.5,1039.1L1254.2,1039.0L1249.0,1038.8L1243.8,1038.6L1238.6,1038.5L1233.4,1038.3L1228.2,1038.2L1223.0,1038.0L1217.8,1037.8L1212.6,1037.7L1207.4,1037.5L1202.2,1037.3L1196.8,1037.0L1191.2,1036.8L1185.3,1036.5L1179.3,1036.2L1173.3,1035.9L1167.2,1035.6L1161.2,1035.3L1155.3,1035.0L1149.7,1034.7L1144.3,1034.4L1139.3,1034.2L1134.7,1033.9L1130.6,1033.7L1127.0,1033.5L1124.1,1033.4Z"/><path d="M1124.0,1038.4L1126.8,1038.5L1130.2,1038.5L1134.0,1038.6L1138.1,1038.7L1142.7,1038.8L1147.6,1038.9L1152.7,1039.0L1158.1,1039.2L1163.8,1039.3L1169.5,1039.4L1175.5,1039.6L1181.5,1039.7L1187.5,1039.9L1193.6,1040.0L1199.7,1040.2L1205.6,1040.3L1211.5,1040.5L1217.2,1040.7L1222.8,1040.8L1228.1,1041.0L1233.4,1041.1L1238.7,1041.3L1244.0,1041.5L1249.4,1041.6L1254.8,1041.8L1260.2,1042.0L1265.6,1042.2L1271.0,1042.3L1276.5,1042.5L1281.8,1042.7L1287.2,1042.9L1292.5,1043.1L1297.8,1043.3L1303.0,1043.5L1308.1,1043.7L1313.1,1043.9L1318.1,1044.2L1322.9,1044.4L1327.7,1044.6L1332.3,1044.9L1338.3,1045.2L1344.2,1045.6L1350.0,1046.0L1355.6,1046.4L1361.2,1046.9L1366.6,1047.3L1371.9,1047.8L1377.1,1048.2L1382.2,1048.7L1387.2,1049.1L1392.1,1049.6L1396.8,1050.1L1401.4,1050.5L1406.0,1051.0L1410.3,1051.4L1416.8,1052.1L1423.2,1052.8L1429.5,1053.6L1435.5,1054.3L1441.2,1055.1L1446.6,1055.7L1451.4,1056.3L1455.8,1056.7L1459.5,1057.1L1462.5,1057.1L1462.6,1056.5L1459.6,1055.8L1456.0,1055.1L1451.7,1054.4L1446.8,1053.6L1441.5,1052.9L1435.8,1052.1L1429.8,1051.4L1423.5,1050.6L1417.1,1049.9L1410.6,1049.2L1406.2,1048.8L1401.7,1048.3L1397.0,1047.9L1392.3,1047.4L1387.4,1046.9L1382.4,1046.5L1377.3,1046.0L1372.1,1045.6L1366.8,1045.1L1361.4,1044.7L1355.8,1044.2L1350.1,1043.8L1344.3,1043.4L1338.4,1043.1L1332.4,1042.7L1327.8,1042.4L1323.0,1042.2L1318.2,1042.0L1313.2,1041.7L1308.2,1041.5L1303.0,1041.3L1297.8,1041.1L1292.6,1040.9L1287.3,1040.7L1281.9,1040.5L1276.5,1040.3L1271.1,1040.1L1265.7,1040.0L1260.3,1039.8L1254.9,1039.6L1249.5,1039.4L1244.1,1039.3L1238.7,1039.1L1233.4,1038.9L1228.2,1038.8L1222.9,1038.6L1217.3,1038.5L1211.6,1038.3L1205.7,1038.1L1199.7,1038.0L1193.7,1037.8L1187.6,1037.7L1181.5,1037.5L1175.5,1037.4L1169.6,1037.2L1163.8,1037.1L1158.2,1037.0L1152.8,1036.8L1147.6,1036.7L1142.7,1036.6L1138.2,1036.5L1134.0,1036.4L1130.2,1036.3L1126.9,1036.3L1124.0,1036.2Z"/><path d="M1235.7,796.5L1236.6,799.7L1238.1,804.1L1239.9,809.2L1241.8,814.8L1243.6,820.4L1244.9,825.7L1245.5,830.3L1245.0,836.2L1243.4,842.2L1241.3,847.8L1239.4,852.7L1238.3,856.2L1238.8,856.4L1240.5,853.1L1242.7,848.4L1245.0,842.7L1246.7,836.5L1247.3,830.2L1246.6,825.4L1245.3,819.9L1243.5,814.2L1241.5,808.7L1239.4,803.6L1237.6,799.3L1236.2,796.3Z"/><path d="M1205.0,710.0L1208.7,710.7L1214.0,711.3L1219.9,712.0L1225.4,712.7L1232.5,714.4L1239.5,716.3L1244.5,717.3L1244.7,716.7L1239.9,714.7L1233.0,712.5L1225.8,710.8L1220.2,710.0L1214.2,709.4L1208.8,709.3L1205.0,709.4Z"/><path d="M1318.3,699.8L1321.4,701.0L1325.8,702.3L1331.0,703.8L1336.7,705.5L1342.5,707.3L1348.2,709.2L1353.4,711.3L1358.2,713.5L1363.0,715.8L1367.8,718.4L1372.5,721.1L1377.0,724.0L1381.5,727.0L1385.8,730.2L1390.0,733.6L1394.1,737.2L1398.1,740.9L1402.0,744.8L1405.7,748.9L1409.4,753.0L1412.9,757.2L1416.4,761.6L1419.7,766.1L1423.0,770.7L1426.1,775.4L1429.1,780.1L1431.9,784.9L1434.6,789.7L1437.0,794.7L1439.3,799.7L1441.5,804.8L1443.5,809.9L1445.3,815.0L1446.8,820.0L1448.1,824.9L1449.3,830.5L1450.2,835.9L1450.8,841.3L1451.1,846.6L1451.1,851.9L1450.8,857.3L1450.2,862.7L1449.3,868.2L1448.1,873.6L1446.6,879.0L1444.8,884.4L1442.7,889.6L1440.6,894.1L1438.3,898.5L1435.8,903.0L1433.0,907.3L1430.1,911.5L1427.0,915.5L1423.8,919.3L1419.9,923.4L1415.8,927.3L1411.5,930.9L1406.9,934.4L1402.0,937.7L1396.8,940.9L1392.6,943.2L1388.2,945.5L1383.5,947.7L1378.7,949.9L1373.8,951.9L1368.8,953.8L1363.9,955.5L1358.9,957.1L1354.0,958.6L1348.9,960.1L1343.9,961.4L1338.8,962.6L1333.6,963.6L1328.5,964.4L1323.4,965.0L1318.3,965.3L1313.2,965.3L1307.9,965.2L1302.5,964.9L1297.2,964.4L1292.0,963.7L1287.0,962.7L1282.3,961.4L1277.9,959.9L1272.5,957.4L1267.6,954.3L1263.0,950.9L1258.8,947.0L1254.8,942.8L1251.1,938.4L1248.1,934.5L1245.4,930.3L1243.0,925.9L1240.7,921.3L1238.6,916.4L1236.7,911.3L1234.9,906.0L1233.4,901.1L1232.1,895.7L1230.8,890.1L1229.7,884.4L1228.7,878.7L1227.9,873.0L1227.2,867.7L1226.8,862.7L1226.6,856.4L1227.0,850.0L1227.5,843.8L1228.2,838.3L1228.7,833.6L1228.8,830.2L1228.3,830.1L1227.6,833.5L1226.7,838.1L1225.9,843.6L1225.1,849.8L1224.8,856.3L1224.9,862.8L1225.4,867.9L1226.0,873.3L1226.8,878.9L1227.8,884.7L1229.0,890.5L1230.2,896.2L1231.6,901.6L1233.1,906.6L1234.9,912.0L1236.9,917.1L1239.0,922.0L1241.3,926.8L1243.8,931.2L1246.6,935.5L1249.6,939.6L1253.4,944.1L1257.4,948.3L1261.8,952.3L1266.5,955.9L1271.7,959.0L1277.2,961.6L1281.7,963.2L1286.6,964.5L1291.7,965.5L1297.0,966.3L1302.4,966.8L1307.8,967.1L1313.2,967.2L1318.4,967.1L1323.6,966.8L1328.8,966.2L1334.0,965.4L1339.2,964.4L1344.3,963.2L1349.4,961.9L1354.5,960.4L1359.5,958.9L1364.5,957.3L1369.5,955.5L1374.5,953.6L1379.5,951.6L1384.3,949.4L1389.0,947.2L1393.5,944.9L1397.8,942.5L1403.1,939.3L1408.0,935.9L1412.7,932.4L1417.1,928.7L1421.2,924.8L1425.2,920.6L1428.5,916.7L1431.6,912.6L1434.6,908.3L1437.4,903.9L1440.0,899.4L1442.3,894.9L1444.4,890.4L1446.6,885.0L1448.4,879.6L1449.9,874.1L1451.1,868.5L1452.0,862.9L1452.7,857.4L1453.0,852.0L1453.0,846.5L1452.7,841.1L1452.0,835.6L1451.1,830.1L1449.9,824.5L1448.6,819.5L1447.0,814.4L1445.2,809.3L1443.2,804.1L1441.0,798.9L1438.7,793.8L1436.2,788.9L1433.6,784.0L1430.7,779.1L1427.7,774.3L1424.5,769.6L1421.2,765.0L1417.8,760.4L1414.3,756.1L1410.8,751.8L1407.1,747.6L1403.3,743.5L1399.4,739.6L1395.4,735.8L1391.2,732.1L1387.0,728.7L1382.6,725.5L1378.1,722.4L1373.4,719.5L1368.7,716.7L1363.9,714.2L1359.0,711.8L1354.1,709.5L1348.9,707.4L1343.1,705.5L1337.2,703.7L1331.4,702.2L1326.2,700.9L1321.7,699.9L1318.5,699.2Z"/><path d="M1407.8,764.7L1409.4,767.6L1412.0,771.3L1415.0,775.7L1418.2,780.5L1421.6,785.5L1424.7,790.5L1427.3,795.1L1429.6,799.7L1431.7,804.3L1433.7,809.0L1435.6,813.7L1437.2,818.4L1438.6,823.1L1439.8,827.6L1440.9,832.7L1441.7,837.8L1442.3,842.7L1442.6,847.6L1442.6,852.5L1442.3,857.5L1441.7,862.5L1440.9,867.5L1439.8,872.6L1438.4,877.6L1436.8,882.5L1434.8,887.4L1432.6,892.2L1430.0,897.0L1427.2,901.7L1424.1,906.3L1420.8,910.7L1417.4,914.8L1413.8,918.6L1410.0,922.1L1406.0,925.5L1401.8,928.7L1397.3,931.7L1392.5,934.7L1388.0,937.2L1383.3,939.6L1378.3,941.9L1373.2,944.1L1368.0,946.1L1362.7,948.0L1357.5,949.7L1352.2,951.3L1346.9,952.8L1341.6,954.1L1336.2,955.3L1330.8,956.2L1325.4,956.8L1320.0,957.2L1314.6,957.3L1308.9,957.1L1303.3,956.7L1297.8,956.0L1292.4,955.1L1287.3,953.8L1282.7,952.2L1277.7,949.9L1273.2,947.1L1268.9,943.9L1265.0,940.3L1261.3,936.5L1257.9,932.4L1254.8,928.1L1251.9,923.6L1249.4,918.7L1247.0,913.6L1244.9,908.2L1243.0,902.5L1241.6,897.9L1240.3,893.0L1239.2,887.8L1238.1,882.5L1237.2,877.2L1236.5,872.0L1235.9,867.1L1235.5,862.5L1235.3,856.6L1235.7,850.7L1236.2,845.1L1236.7,840.0L1237.2,835.7L1237.4,832.5L1236.8,832.4L1236.2,835.5L1235.4,839.8L1234.6,844.9L1233.9,850.6L1233.6,856.6L1233.7,862.6L1234.1,867.3L1234.7,872.3L1235.5,877.5L1236.4,882.8L1237.5,888.2L1238.6,893.4L1239.9,898.4L1241.3,903.1L1243.3,908.8L1245.4,914.3L1247.8,919.5L1250.4,924.4L1253.3,929.1L1256.5,933.5L1260.0,937.6L1263.8,941.6L1267.8,945.2L1272.2,948.6L1276.9,951.5L1282.0,953.9L1286.8,955.5L1292.0,956.8L1297.5,957.8L1303.1,958.5L1308.9,958.9L1314.5,959.0L1320.1,959.0L1325.5,958.6L1331.0,957.9L1336.5,957.0L1342.0,955.8L1347.4,954.5L1352.7,953.0L1358.0,951.4L1363.3,949.7L1368.6,947.7L1373.9,945.7L1379.0,943.5L1384.1,941.1L1388.9,938.7L1393.4,936.2L1398.3,933.2L1402.8,930.1L1407.1,926.9L1411.2,923.5L1415.0,919.8L1418.7,915.9L1422.2,911.8L1425.6,907.3L1428.7,902.6L1431.6,897.8L1434.2,892.9L1436.4,888.1L1438.4,883.1L1440.1,878.1L1441.5,873.0L1442.6,867.9L1443.5,862.7L1444.1,857.6L1444.3,852.6L1444.3,847.6L1444.1,842.6L1443.5,837.5L1442.6,832.4L1441.5,827.2L1440.3,822.6L1438.9,817.9L1437.2,813.1L1435.4,808.4L1433.3,803.6L1431.2,798.9L1428.9,794.3L1426.2,789.6L1423.1,784.6L1419.7,779.5L1416.2,774.8L1413.0,770.5L1410.3,767.0L1408.2,764.4Z"/><path d="M1328.3,759.4L1331.8,761.1L1336.8,763.1L1342.7,765.4L1349.0,768.0L1354.9,770.6L1359.9,773.3L1365.0,776.5L1369.5,779.9L1373.7,783.5L1377.5,787.4L1381.0,791.7L1384.3,796.5L1387.3,801.7L1389.9,807.2L1392.2,812.7L1394.3,818.2L1396.0,823.5L1397.5,828.8L1398.6,834.0L1399.3,839.3L1399.6,844.6L1399.3,849.9L1398.6,855.4L1397.5,860.8L1396.0,866.0L1394.3,870.9L1392.3,875.5L1390.0,879.9L1387.3,884.0L1384.4,888.1L1381.1,892.0L1377.4,896.0L1373.4,900.0L1369.1,903.9L1364.6,907.4L1359.9,910.6L1355.0,913.3L1349.8,915.7L1344.3,917.8L1338.9,919.6L1333.5,921.1L1328.2,922.4L1322.9,923.5L1317.6,924.2L1312.4,924.4L1307.2,923.8L1301.8,922.4L1296.2,920.3L1290.7,917.6L1285.5,914.4L1280.9,910.7L1277.5,907.1L1274.4,903.1L1271.6,898.7L1269.0,894.0L1266.9,889.2L1265.1,884.4L1263.9,879.4L1263.0,874.1L1262.5,868.7L1262.3,863.2L1262.3,857.8L1262.5,852.6L1262.9,846.5L1263.7,840.5L1264.7,834.6L1266.1,828.9L1267.8,823.5L1270.1,818.1L1273.1,812.5L1276.1,807.2L1278.8,802.7L1280.5,799.3L1280.1,799.1L1277.9,802.1L1275.0,806.5L1271.7,811.7L1268.5,817.3L1266.1,822.9L1264.4,828.5L1263.0,834.3L1261.9,840.3L1261.2,846.4L1260.8,852.5L1260.6,857.8L1260.6,863.3L1260.8,868.8L1261.3,874.3L1262.1,879.7L1263.5,884.9L1265.3,889.9L1267.5,894.8L1270.0,899.6L1273.0,904.1L1276.2,908.3L1279.7,912.0L1284.5,915.8L1289.8,919.1L1295.5,921.9L1301.2,924.1L1306.8,925.5L1312.3,926.1L1317.8,926.0L1323.2,925.3L1328.6,924.1L1333.9,922.8L1339.4,921.3L1344.9,919.5L1350.4,917.3L1355.8,914.9L1360.9,912.1L1365.7,908.8L1370.3,905.2L1374.6,901.3L1378.7,897.3L1382.4,893.2L1385.8,889.1L1388.8,885.0L1391.5,880.8L1393.9,876.3L1395.9,871.6L1397.7,866.5L1399.2,861.2L1400.3,855.7L1401.1,850.1L1401.3,844.6L1401.1,839.2L1400.3,833.7L1399.2,828.3L1397.7,823.0L1395.9,817.6L1393.9,812.1L1391.5,806.5L1388.8,800.9L1385.8,795.5L1382.5,790.7L1378.8,786.3L1374.9,782.2L1370.6,778.5L1366.0,775.0L1360.8,771.7L1355.7,769.0L1349.7,766.4L1343.3,763.9L1337.3,761.8L1332.2,760.0L1328.5,758.9Z"/><path d="M1259.2,939.8L1261.8,942.3L1265.5,945.8L1270.0,949.6L1274.9,953.2L1279.9,956.0L1285.3,958.1L1291.3,959.7L1297.4,960.8L1302.6,961.6L1306.2,962.0L1306.3,961.5L1302.8,960.4L1297.6,959.3L1291.7,958.0L1285.8,956.4L1280.6,954.5L1275.9,951.7L1271.1,948.2L1266.5,944.6L1262.5,941.5L1259.6,939.4Z"/><path d="M871.2,848.5L875.6,849.8L881.9,851.4L887.3,853.6L891.3,856.8L894.9,860.7L897.4,864.7L899.2,871.0L899.3,877.8L898.7,882.9L897.4,888.2L895.5,892.9L892.7,896.9L889.1,900.5L885.4,903.1L879.1,905.0L872.3,905.4L865.5,905.0L859.1,903.0L855.1,900.4L851.1,896.9L848.0,892.8L846.0,888.3L844.8,883.1L844.3,877.9L844.5,872.4L845.5,866.7L847.1,861.8L850.5,855.9L855.3,851.7L860.5,850.1L866.8,849.3L871.3,848.5L871.3,847.7L866.6,847.6L860.1,847.9L854.1,849.4L848.4,854.2L844.7,860.7L843.0,866.1L841.9,872.1L841.6,877.9L842.2,883.6L843.5,889.1L845.7,894.2L849.2,898.7L853.5,902.5L858.1,905.5L865.1,907.6L872.3,908.0L879.5,907.6L886.5,905.5L890.8,902.5L894.7,898.6L897.8,894.1L900.0,889.0L901.3,883.4L901.9,877.9L901.8,870.6L899.8,863.7L897.0,859.1L893.1,854.8L888.5,851.4L882.5,849.3L876.0,848.1L871.4,847.7Z"/><path d="M850.6,848.4L845.9,852.0L841.1,857.9L839.2,865.2L838.9,873.0L839.6,880.4L841.9,888.0L844.0,892.5L846.6,897.4L849.9,901.9L854.2,905.2L859.6,906.9L865.9,907.4L872.4,907.1L878.3,906.3L883.8,905.2L889.3,903.6L894.2,901.4L898.4,898.2L901.7,893.9L904.2,888.8L905.9,883.3L906.6,877.9L906.0,872.6L904.2,867.4L901.9,862.3L899.6,857.8L895.7,852.3L891.4,847.5L888.1,844.5L887.6,844.9L890.3,848.5L894.2,853.4L897.7,858.9L900.0,863.3L902.2,868.2L903.8,873.1L904.4,877.9L903.7,882.8L902.2,888.0L899.8,892.8L896.9,896.6L893.1,899.5L888.5,901.6L883.3,903.1L878.0,904.1L872.2,904.9L865.9,905.2L860.0,904.7L855.2,903.3L851.5,900.4L848.5,896.2L846.0,891.5L844.0,887.3L841.7,880.0L841.1,873.0L841.4,865.5L842.9,858.8L847.1,853.1L851.0,848.8Z"/><path d="M854.9,847.9L858.6,845.7L863.6,842.1L869.2,838.0L872.8,835.1L876.9,831.9L881.0,828.5L885.1,825.3L888.8,822.3L894.2,817.8L899.1,813.8L903.1,810.5L908.2,807.6L911.5,806.0L911.2,805.2L907.5,806.1L901.9,808.6L897.5,811.7L892.5,815.7L887.0,820.2L883.3,823.1L879.3,826.4L875.1,829.7L871.1,832.9L867.5,835.8L862.1,840.3L857.5,844.3L854.4,847.3Z"/><path d="M911.1,805.3L907.1,807.9L901.7,812.2L896.6,817.4L893.0,822.0L889.4,827.1L886.2,832.1L883.9,836.4L882.3,841.7L882.6,844.7L883.4,844.7L884.0,842.2L886.1,837.4L888.5,833.6L891.7,828.7L895.3,823.6L898.7,819.2L903.6,814.2L908.4,809.5L911.6,805.9Z"/><path d="M870.5,831.3L874.0,829.1L878.8,825.6L883.6,822.2L888.5,819.0L893.6,816.0L898.2,813.4L903.8,810.2L907.6,807.9L907.3,807.3L903.1,808.7L897.1,811.5L892.5,814.1L887.4,817.2L882.4,820.3L877.5,823.9L873.0,827.8L870.1,830.8Z"/><path d="M888.0,839.2L891.7,838.2L896.9,836.5L902.6,834.4L907.9,832.3L912.8,830.5L917.8,828.6L922.6,826.9L927.3,825.5L933.8,824.0L940.2,822.8L944.6,821.7L944.5,820.8L939.9,820.9L933.4,821.6L926.6,822.8L921.8,824.3L916.8,826.0L911.9,827.8L906.9,829.7L901.6,831.8L896.0,834.2L891.1,836.6L887.7,838.4Z"/><path d="M944.3,820.9L940.9,822.1L936.1,824.3L930.9,826.9L926.2,829.9L922.2,833.2L918.4,836.8L914.8,840.4L911.4,843.7L906.6,848.3L902.2,852.8L899.3,856.1L899.9,856.7L903.4,854.1L908.3,850.0L913.2,845.6L916.7,842.3L920.2,838.7L923.9,835.2L927.7,832.1L932.2,829.2L937.2,826.3L941.7,823.7L944.7,821.6Z"/><path d="M882.2,867.4L887.0,864.1L893.3,860.3L897.7,858.8L902.6,857.6L907.6,856.5L915.0,855.1L922.4,853.6L930.1,850.7L935.9,847.9L935.6,847.3L929.5,849.1L921.8,851.4L914.6,852.9L907.2,854.4L902.2,855.4L897.1,856.7L892.3,858.4L886.0,862.8L881.8,866.9Z"/><path d="M912.2,848.8L916.3,851.0L922.1,852.4L928.3,851.1L932.9,848.8L932.7,848.3L927.8,849.4L922.1,850.6L916.8,849.4L912.4,848.3Z"/><path d="M931.5,849.6L931.9,854.3L931.8,860.1L929.5,865.4L926.1,870.2L921.8,873.4L916.7,875.8L911.2,877.9L905.2,879.7L897.7,881.6L891.7,883.4L891.9,884.1L898.1,883.4L905.8,882.0L912.0,880.2L917.7,878.0L923.1,875.4L927.8,871.9L931.6,866.6L933.9,860.5L933.5,854.2L932.2,849.5Z"/><path d="M933.7,860.1L935.4,860.9L938.8,861.0L944.7,859.4L951.9,856.4L956.7,853.4L961.7,849.7L966.8,845.5L970.5,841.9L974.2,837.9L977.8,833.8L981.5,829.8L985.3,825.9L989.4,821.8L993.1,818.1L996.1,815.2L999.4,811.8L1000.8,810.3L999.2,808.8L997.8,810.3L994.5,813.6L991.6,816.6L987.8,820.3L983.8,824.3L979.9,828.3L976.2,832.3L972.5,836.4L968.9,840.3L965.3,843.9L960.4,848.0L955.5,851.6L950.9,854.5L944.1,857.7L938.5,859.6L935.5,859.8L933.9,859.5Z"/><path d="M880.0,906.5L884.6,908.1L891.1,910.1L897.3,912.1L902.4,914.0L907.1,915.9L911.8,917.9L916.7,920.5L921.6,923.1L926.8,924.9L934.4,924.8L941.9,922.9L946.9,921.0L951.9,918.7L956.8,915.9L961.7,912.9L966.6,909.5L971.5,906.1L976.6,902.8L981.6,899.5L986.1,896.3L991.8,891.5L995.5,887.9L995.1,887.4L990.9,890.4L985.0,894.7L980.4,897.7L975.4,901.0L970.3,904.3L965.4,907.7L960.5,911.0L955.7,914.1L950.9,916.7L946.1,919.0L941.3,920.8L934.1,922.6L927.1,922.7L922.5,921.1L917.7,918.5L912.8,916.0L908.0,913.9L903.2,911.9L898.0,910.0L891.6,908.3L884.9,906.7L880.2,905.9Z"/><path d="M811.9,887.9L815.5,885.9L820.2,882.7L824.9,879.2L829.8,875.9L835.1,873.4L839.2,871.4L839.0,870.7L834.5,871.7L828.8,874.0L823.7,877.4L818.9,880.9L814.5,884.4L811.5,887.4Z"/><path d="M822.6,883.9L825.9,881.8L829.8,878.6L834.1,875.3L837.3,872.2L837.0,871.8L833.1,873.9L828.7,877.2L824.9,880.6L822.3,883.6Z"/><path d="M814.3,888.7L814.5,891.8L815.6,895.8L817.2,900.2L819.2,903.4L819.8,903.2L819.2,899.4L817.6,895.1L816.4,891.3L815.0,888.5Z"/><path d="M821.6,900.7L827.4,899.1L834.6,896.5L841.0,893.5L847.3,890.6L853.8,888.1L858.7,886.0L858.5,885.4L853.2,886.4L846.5,888.6L840.1,891.5L833.7,894.5L826.7,897.4L821.4,900.0Z"/><path d="M825.2,903.6L827.6,905.1L832.2,906.2L837.1,905.6L842.9,904.4L848.9,903.5L855.4,903.2L862.3,903.2L868.2,903.4L875.2,904.6L880.0,905.6L880.2,904.9L875.6,902.9L868.5,901.2L862.3,900.8L855.4,900.8L848.7,901.1L842.5,902.1L836.7,903.4L832.2,904.3L828.0,903.7L825.5,903.0Z"/><path d="M850.8,861.6L855.2,861.2L860.6,860.8L866.3,861.0L869.4,861.7L867.6,863.7L863.7,867.5L860.6,871.7L858.0,875.5L856.4,877.5L855.5,878.6L855.9,879.1L857.2,878.3L859.2,876.4L862.1,872.8L865.2,868.8L869.1,865.0L871.2,860.9L866.6,859.1L860.5,858.9L854.9,859.7L850.7,861.0Z"/><path d="M846.2,854.8L850.1,852.3L855.4,848.7L859.5,846.4L864.1,844.0L868.7,842.1L876.3,840.6L883.0,840.0L887.1,840.5L889.7,841.2L890.0,840.4L887.6,838.8L883.1,837.7L875.9,837.9L868.0,839.4L863.0,841.4L858.2,843.9L853.9,846.5L848.8,850.7L845.6,854.1Z"/><path d="M854.9,849.0L861.2,847.0L868.7,844.0L875.7,842.6L881.1,841.2L881.0,840.4L875.4,840.2L868.0,841.5L860.2,844.6L854.5,848.2Z"/><path d="M858.8,846.9L863.0,844.7L868.8,841.0L874.9,836.9L879.4,833.6L884.3,830.2L889.1,826.6L893.5,823.2L899.2,818.3L904.3,813.4L907.7,809.8L907.2,809.3L903.2,812.2L897.8,816.6L892.0,821.3L887.6,824.7L882.8,828.2L878.0,831.7L873.5,834.9L867.6,839.2L862.1,843.3L858.4,846.3Z"/><path d="M822.7,883.0L827.0,880.5L831.8,876.9L836.1,874.4L839.2,872.3L838.9,871.7L835.3,872.7L830.7,875.0L825.7,878.7L822.3,882.5Z"/><path d="M1026.5,673.9L1024.7,677.5L1022.5,682.8L1020.0,689.0L1017.7,695.5L1016.2,700.0L1014.6,704.9L1012.9,710.0L1011.3,715.1L1009.7,720.3L1008.3,725.2L1006.8,730.8L1005.4,736.1L1004.1,741.5L1003.0,747.2L1002.0,753.6L1001.6,758.7L1001.3,764.1L1001.1,769.7L1001.0,775.5L1000.9,781.3L1000.7,787.1L1000.5,792.7L1000.1,798.4L999.7,804.1L999.3,809.9L998.9,815.6L998.4,821.2L997.9,826.6L997.4,831.7L996.6,837.3L995.7,842.4L994.8,847.4L993.9,852.4L993.2,857.5L992.7,863.0L992.5,868.4L992.5,874.3L992.7,880.5L992.9,886.5L993.1,892.0L993.3,896.7L993.4,900.0L996.2,900.0L996.1,896.6L995.9,891.9L995.7,886.4L995.5,880.4L995.3,874.3L995.3,868.4L995.5,863.2L995.9,857.8L996.7,852.8L997.5,847.9L998.5,842.9L999.4,837.7L1000.1,832.0L1000.7,826.8L1001.2,821.4L1001.7,815.8L1002.1,810.1L1002.5,804.3L1002.9,798.6L1003.3,792.9L1003.5,787.2L1003.7,781.4L1003.8,775.5L1003.9,769.8L1004.1,764.2L1004.4,758.9L1004.8,753.9L1005.7,747.7L1006.8,742.1L1008.1,736.8L1009.5,731.5L1011.0,726.0L1012.4,721.1L1014.0,716.0L1015.6,710.8L1017.3,705.8L1018.9,700.9L1020.4,696.4L1022.6,689.9L1024.6,683.5L1026.3,678.1L1027.3,674.2Z"/><path d="M1018.7,699.0L1017.7,702.2L1016.6,706.7L1015.3,712.0L1013.9,717.9L1012.8,724.1L1011.7,730.1L1011.0,735.4L1010.2,741.0L1009.5,746.8L1008.8,752.6L1008.2,758.4L1007.6,764.0L1007.0,769.3L1006.4,774.8L1005.9,780.0L1005.4,784.9L1004.9,789.8L1004.4,795.0L1003.9,800.5L1003.4,806.0L1002.9,812.3L1002.4,818.8L1002.0,825.2L1001.7,831.1L1001.5,836.0L1001.5,839.7L1002.2,839.7L1002.8,836.1L1003.4,831.2L1004.0,825.3L1004.6,819.0L1005.1,812.4L1005.6,806.2L1006.1,800.7L1006.6,795.2L1007.1,790.0L1007.6,785.1L1008.1,780.2L1008.6,775.1L1009.2,769.5L1009.8,764.3L1010.4,758.7L1011.0,752.9L1011.7,747.0L1012.4,741.3L1013.1,735.7L1013.9,730.5L1014.9,724.5L1016.1,718.4L1017.2,712.5L1018.2,707.1L1019.0,702.5L1019.4,699.1Z"/><path d="M1040.6,707.0L1041.3,711.1L1042.6,716.9L1044.2,723.7L1046.0,730.6L1047.3,735.4L1048.6,740.5L1050.0,745.8L1051.4,751.1L1052.7,756.5L1053.8,761.8L1054.9,767.0L1055.9,772.2L1056.8,777.4L1057.6,782.6L1058.2,787.7L1058.5,792.8L1058.4,798.3L1058.1,804.1L1057.5,809.9L1056.8,815.3L1056.2,820.1L1055.7,823.7L1053.5,828.7L1051.7,830.0L1052.0,830.6L1054.6,829.5L1057.4,824.4L1058.3,820.5L1059.2,815.7L1059.9,810.1L1060.5,804.3L1060.8,798.4L1060.9,792.8L1060.6,787.5L1060.0,782.2L1059.2,777.0L1058.3,771.8L1057.2,766.5L1056.2,761.3L1055.0,756.0L1053.7,750.6L1052.4,745.1L1051.0,739.8L1049.6,734.8L1048.4,730.0L1046.5,723.1L1044.5,716.4L1042.8,710.7L1041.3,706.8Z"/><path d="M1054.6,663.1L1053.6,666.8L1052.4,672.0L1051.1,678.2L1049.9,684.8L1049.1,691.1L1048.6,696.2L1048.1,701.3L1047.7,706.6L1047.5,711.9L1047.4,717.3L1047.5,722.6L1047.9,727.8L1048.6,733.1L1049.4,738.3L1050.3,743.5L1051.3,748.8L1052.2,754.0L1053.3,759.5L1054.4,765.6L1055.8,771.6L1057.1,777.1L1058.3,781.7L1059.3,785.1L1060.0,784.9L1059.7,781.5L1058.9,776.7L1057.9,771.1L1056.8,765.1L1055.6,759.1L1054.6,753.5L1053.7,748.3L1052.7,743.1L1051.8,737.9L1051.0,732.7L1050.4,727.6L1050.0,722.4L1049.8,717.2L1049.9,712.0L1050.2,706.8L1050.5,701.5L1051.0,696.4L1051.5,691.4L1052.3,685.2L1053.3,678.6L1054.3,672.4L1055.1,667.0L1055.4,663.2Z"/><path d="M1063.8,659.8L1063.4,663.2L1062.8,667.9L1062.1,673.5L1061.3,679.5L1060.6,685.5L1059.9,691.1L1059.3,696.3L1058.7,701.5L1058.1,706.7L1057.6,712.0L1057.1,717.2L1056.8,722.4L1056.6,727.8L1056.5,733.2L1056.5,738.6L1056.6,743.9L1056.7,749.0L1056.8,753.8L1057.2,760.8L1057.8,767.5L1058.5,773.2L1059.3,777.2L1060.1,777.2L1060.2,773.1L1060.0,767.3L1059.7,760.6L1059.4,753.7L1059.3,749.0L1059.2,743.9L1059.2,738.6L1059.2,733.2L1059.2,727.8L1059.4,722.6L1059.8,717.4L1060.2,712.2L1060.8,707.0L1061.3,701.8L1062.0,696.6L1062.6,691.4L1063.2,685.8L1063.9,679.8L1064.7,673.8L1065.4,668.3L1066.0,663.6L1066.5,660.2Z"/><path d="M981.0,832.6L982.9,830.1L985.5,826.7L988.6,822.7L992.1,818.2L995.8,813.7L999.7,809.2L1003.2,805.4L1007.1,801.3L1011.3,797.1L1015.5,792.8L1019.7,788.7L1023.8,784.8L1027.7,781.2L1031.8,777.5L1035.8,774.1L1039.6,771.0L1043.4,768.1L1047.2,765.3L1051.0,762.6L1055.6,759.5L1060.2,756.6L1064.8,753.9L1069.5,751.3L1074.3,748.6L1079.8,745.5L1085.9,742.3L1091.8,739.1L1096.9,736.4L1100.6,734.5L1099.4,732.4L1095.8,734.3L1090.7,737.0L1084.7,740.1L1078.7,743.4L1073.2,746.4L1068.3,749.2L1063.6,751.9L1058.9,754.6L1054.3,757.4L1049.6,760.6L1045.7,763.3L1041.9,766.2L1038.1,769.1L1034.3,772.3L1030.3,775.7L1026.1,779.4L1022.2,783.0L1018.1,786.9L1013.8,791.1L1009.5,795.4L1005.4,799.6L1001.4,803.8L997.8,807.6L993.9,812.1L990.2,816.7L986.7,821.2L983.6,825.2L981.0,828.6L979.0,831.1Z"/><path d="M1042.7,772.8L1046.1,770.9L1050.9,767.8L1056.3,764.3L1061.7,760.8L1066.5,757.8L1071.9,755.0L1077.1,752.5L1082.1,750.4L1086.6,748.5L1094.7,745.6L1100.3,743.9L1099.7,741.8L1094.0,743.5L1085.9,746.5L1081.3,748.4L1076.3,750.5L1070.9,753.0L1065.4,755.9L1060.5,758.9L1055.1,762.5L1049.8,766.3L1045.3,769.7L1042.3,772.2Z"/><path d="M1061.5,771.2L1065.4,769.1L1070.9,765.7L1076.8,761.6L1082.2,757.9L1087.4,754.3L1092.7,750.7L1097.4,747.6L1100.7,745.4L1099.3,743.4L1096.1,745.6L1091.4,748.7L1086.1,752.3L1080.9,755.9L1075.5,759.6L1069.6,763.7L1064.4,767.6L1061.0,770.6Z"/><path d="M999.4,660.8L1001.9,663.7L1005.3,667.8L1009.4,672.6L1013.9,677.3L1018.3,681.3L1023.2,684.6L1028.6,687.8L1034.0,690.5L1038.7,692.5L1042.5,693.7L1045.5,691.5L1044.4,688.0L1043.7,688.2L1044.0,691.0L1042.5,691.9L1039.5,690.6L1035.0,688.3L1029.7,685.6L1024.4,682.6L1019.8,679.4L1015.6,675.6L1011.2,671.0L1007.2,666.3L1003.7,662.1L1001.2,659.2Z"/><path d="M1010.8,661.0L1016.2,663.5L1023.2,667.2L1027.7,670.6L1032.4,674.3L1036.0,676.7L1036.5,676.2L1033.6,672.9L1029.1,668.9L1024.3,665.3L1017.2,661.5L1011.7,659.0Z"/><path d="M997.4,847.7L1001.0,845.0L1004.2,842.0L1007.3,838.9L1010.5,835.8L1013.6,832.7L1016.6,829.4L1019.3,825.9L1018.8,825.4L1015.3,828.1L1012.0,831.1L1008.9,834.2L1005.8,837.3L1002.7,840.5L999.7,843.7L997.0,847.3Z"/><path d="M1000.5,816.5L1005.7,814.4L1010.7,814.0L1012.5,818.7L1014.1,826.4L1015.6,831.9L1016.2,831.8L1015.8,826.0L1014.4,818.2L1011.8,812.3L1005.2,812.7L1000.2,816.0Z"/><path d="M1007.1,896.6L1004.1,898.5L1000.1,901.3L995.4,904.7L990.3,908.5L985.3,912.5L980.6,916.4L976.7,919.6L972.7,923.0L968.7,926.5L964.7,930.0L960.7,933.5L956.7,937.1L952.7,940.5L948.7,944.0L944.8,947.4L940.8,950.9L936.8,954.3L932.8,957.8L928.9,961.2L924.9,964.6L920.8,968.1L916.6,971.7L912.4,975.3L908.2,978.8L904.2,982.3L900.4,985.6L897.0,988.8L891.5,994.1L886.6,999.2L882.7,1003.8L880.0,1007.9L879.9,1013.4L884.2,1016.7L888.4,1018.6L893.7,1020.0L899.7,1020.6L904.8,1020.2L910.4,1019.2L915.8,1017.9L920.4,1016.7L927.2,1014.3L931.4,1012.3L931.1,1011.6L926.7,1012.8L919.8,1014.7L915.3,1015.6L909.9,1016.8L904.5,1017.8L899.7,1018.2L894.1,1017.6L889.2,1016.3L885.5,1014.6L882.1,1012.3L882.3,1008.6L884.6,1005.3L888.4,1000.8L893.3,995.8L898.7,990.6L902.0,987.4L905.8,984.1L909.8,980.7L913.9,977.1L918.2,973.5L922.4,970.0L926.5,966.5L930.4,963.0L934.4,959.6L938.4,956.1L942.4,952.7L946.3,949.2L950.3,945.8L954.3,942.4L958.3,938.9L962.3,935.3L966.3,931.8L970.3,928.3L974.3,924.9L978.2,921.5L982.1,918.3L986.8,914.4L991.8,910.4L996.8,906.5L1001.2,902.8L1005.0,899.7L1007.5,897.2Z"/><path d="M920.3,1015.9L923.2,1013.9L926.8,1010.8L931.0,1007.1L935.6,1003.0L940.5,998.6L945.3,994.4L950.0,990.4L954.2,986.9L958.8,983.6L963.4,980.5L967.9,977.7L972.4,975.0L976.9,972.3L981.3,969.5L985.7,966.6L990.2,963.4L994.8,960.1L999.3,956.7L1003.8,953.4L1008.0,950.1L1011.9,947.1L1015.5,944.2L1021.0,939.6L1025.6,935.2L1029.3,931.5L1031.7,928.7L1031.2,928.2L1028.2,930.4L1024.3,933.8L1019.5,937.9L1014.0,942.4L1010.4,945.2L1006.5,948.2L1002.3,951.5L997.9,954.8L993.3,958.1L988.8,961.4L984.4,964.6L980.0,967.5L975.6,970.2L971.1,972.9L966.6,975.6L962.0,978.5L957.4,981.6L952.8,985.0L948.4,988.5L943.7,992.5L938.8,996.8L934.0,1001.2L929.5,1005.5L925.5,1009.4L922.2,1012.8L919.9,1015.4Z"/><path d="M931.4,963.9L935.0,961.6L939.8,958.1L945.2,953.8L950.4,949.6L954.7,946.1L959.4,942.3L964.0,938.4L967.8,935.0L970.4,932.4L970.0,931.9L967.0,933.9L962.9,937.1L958.2,940.7L953.5,944.6L949.2,948.1L944.0,952.3L938.7,956.6L934.1,960.5L931.1,963.5Z"/><path d="M951.8,1008.6L955.2,1007.5L959.9,1005.7L965.4,1003.5L971.2,1001.0L976.9,998.6L981.8,996.4L987.1,994.2L992.1,992.2L997.0,990.3L1001.7,988.0L1006.2,985.1L1010.4,981.6L1014.4,977.6L1018.2,973.4L1021.7,968.9L1025.0,964.4L1028.1,959.9L1030.9,955.2L1033.6,950.4L1036.0,945.3L1038.1,940.0L1039.8,935.4L1041.2,930.7L1042.5,925.8L1043.6,920.8L1044.7,915.6L1045.6,910.1L1046.4,905.2L1047.0,900.0L1047.6,894.7L1048.1,889.3L1048.5,883.8L1048.9,878.3L1049.3,872.9L1049.7,867.0L1050.1,860.7L1050.4,854.2L1050.5,847.9L1050.6,842.2L1050.6,837.4L1050.4,833.8L1049.6,833.8L1049.1,837.3L1048.7,842.1L1048.3,847.8L1048.0,854.1L1047.7,860.6L1047.3,866.9L1046.9,872.7L1046.5,878.2L1046.1,883.6L1045.7,889.1L1045.2,894.5L1044.6,899.7L1044.0,904.8L1043.2,909.7L1042.3,915.1L1041.3,920.3L1040.1,925.3L1038.9,930.0L1037.5,934.7L1035.9,939.2L1033.7,944.3L1031.4,949.3L1028.8,954.0L1026.0,958.6L1023.0,963.0L1019.8,967.4L1016.3,971.8L1012.7,976.0L1008.8,979.8L1004.7,983.1L1000.5,985.9L996.0,988.0L991.2,990.0L986.2,991.9L980.9,994.1L975.9,996.4L970.3,998.8L964.5,1001.4L959.2,1003.9L954.6,1006.1L951.5,1007.9Z"/><path d="M951.4,1008.5L953.6,1011.7L957.2,1016.0L962.3,1019.5L967.3,1020.8L972.9,1021.4L978.9,1021.6L985.0,1021.5L990.0,1021.6L995.2,1021.8L1000.6,1021.6L1006.1,1020.7L1011.5,1018.6L1015.4,1016.3L1019.2,1013.4L1022.9,1010.1L1026.6,1006.5L1030.3,1002.5L1034.1,998.4L1037.9,994.2L1041.4,990.3L1044.9,986.1L1048.6,981.6L1052.2,977.0L1055.8,972.3L1059.3,967.7L1062.7,963.2L1065.8,958.8L1069.3,953.8L1072.8,948.6L1076.2,943.4L1079.2,938.3L1081.9,933.7L1084.1,929.8L1085.6,926.8L1084.9,926.4L1082.9,929.0L1080.3,932.7L1077.4,937.1L1074.2,942.1L1070.8,947.3L1067.3,952.5L1063.9,957.4L1060.7,961.7L1057.4,966.2L1053.9,970.8L1050.3,975.5L1046.7,980.1L1043.1,984.5L1039.5,988.7L1036.1,992.6L1032.3,996.8L1028.6,1000.9L1024.9,1004.8L1021.2,1008.4L1017.6,1011.6L1014.0,1014.3L1010.5,1016.4L1005.5,1018.3L1000.3,1019.2L995.2,1019.3L990.0,1019.2L985.1,1019.1L979.0,1019.2L973.1,1019.0L967.7,1018.4L963.2,1017.4L958.5,1014.5L954.7,1010.7L951.9,1008.0Z"/><path d="M1036.9,915.7L1040.8,918.2L1045.0,920.1L1049.1,921.9L1053.6,923.2L1053.8,922.6L1049.9,920.1L1045.8,918.3L1041.6,916.4L1037.1,915.2Z"/><path d="M995.9,883.9L995.6,888.7L996.0,893.3L996.5,897.9L997.7,902.5L998.4,902.4L998.7,897.7L998.2,893.1L997.7,888.4L996.5,883.9Z"/><path d="M935.0,860.1L939.6,859.5L946.2,858.1L954.0,855.2L958.3,852.9L963.0,850.1L968.0,846.9L973.0,843.5L977.8,840.0L982.1,836.5L986.4,832.2L990.3,827.8L993.8,823.3L997.2,818.7L1000.8,814.1L1004.0,810.0L1007.4,805.6L1010.9,801.2L1014.1,797.0L1017.0,793.1L1019.4,789.9L1023.3,783.7L1025.0,780.5L1023.0,779.5L1021.5,782.6L1017.5,788.7L1015.2,791.8L1012.4,795.6L1009.1,799.9L1005.7,804.3L1002.3,808.6L999.0,812.7L995.5,817.4L992.0,822.0L988.6,826.4L984.8,830.7L980.6,834.9L976.5,838.3L971.8,841.7L966.8,845.1L961.9,848.2L957.2,851.0L953.1,853.2L945.7,856.4L939.3,858.1L934.9,859.5Z"/><path d="M998.2,843.3L1002.0,841.0L1005.5,838.3L1008.9,835.5L1012.3,832.7L1015.6,829.8L1018.6,826.6L1018.3,826.2L1014.5,828.5L1011.0,831.2L1007.6,834.0L1004.2,836.8L1000.9,839.6L997.9,842.9Z"/><path d="M1044.5,895.4L1049.6,894.2L1056.7,892.0L1063.6,888.7L1068.2,885.2L1072.5,881.1L1076.7,876.5L1080.6,871.7L1083.5,867.7L1086.3,863.5L1088.9,859.1L1091.3,854.3L1093.8,849.1L1095.8,844.2L1097.8,838.7L1099.7,832.9L1101.6,827.3L1103.3,822.0L1104.9,817.5L1107.6,810.5L1109.7,805.1L1112.0,801.2L1117.6,797.3L1122.5,795.2L1122.2,794.5L1116.9,795.8L1110.5,799.6L1107.5,804.1L1105.3,809.6L1102.7,816.7L1101.0,821.2L1099.3,826.5L1097.4,832.2L1095.5,837.9L1093.6,843.3L1091.6,848.2L1089.2,853.3L1086.7,857.9L1084.2,862.2L1081.6,866.3L1078.7,870.2L1074.9,874.9L1070.8,879.4L1066.6,883.3L1062.4,886.6L1055.8,890.1L1049.0,892.7L1044.3,894.7Z"/><path d="M1086.8,863.6L1087.5,867.5L1089.0,873.1L1091.7,878.9L1094.6,883.2L1098.1,887.7L1102.2,892.1L1106.8,896.0L1112.1,899.4L1118.1,902.5L1124.1,905.2L1129.4,907.3L1135.4,909.0L1140.4,909.8L1144.2,911.0L1147.7,912.7L1149.0,917.5L1148.8,921.0L1148.3,925.8L1147.5,931.3L1146.4,936.8L1145.1,942.1L1143.5,946.5L1140.7,951.8L1137.1,956.2L1133.1,960.3L1128.9,964.7L1125.4,968.5L1121.6,972.3L1117.7,976.1L1113.9,979.8L1110.4,983.3L1106.2,987.3L1102.0,991.3L1098.4,995.0L1095.5,998.4L1092.9,1004.3L1092.3,1008.2L1093.0,1008.3L1094.3,1004.8L1097.2,999.5L1100.0,996.5L1103.7,993.0L1107.8,989.1L1112.1,985.0L1115.6,981.5L1119.4,977.8L1123.3,974.0L1127.1,970.2L1130.7,966.4L1134.9,962.0L1138.9,957.8L1142.7,953.1L1145.7,947.5L1147.4,942.8L1148.8,937.4L1149.9,931.7L1150.7,926.1L1151.2,921.2L1151.4,917.1L1149.7,911.3L1145.1,908.8L1140.9,907.5L1135.9,906.7L1130.2,905.0L1125.0,902.9L1119.2,900.3L1113.3,897.3L1108.2,894.1L1103.9,890.3L1100.0,886.1L1096.5,881.8L1093.7,877.8L1090.8,872.3L1088.9,867.1L1087.5,863.4Z"/><path d="M1090.8,1009.5L1094.3,1010.3L1099.3,1011.0L1105.2,1011.4L1111.3,1011.3L1116.7,1010.6L1122.7,1009.6L1128.6,1008.3L1133.8,1007.0L1137.3,1005.8L1137.1,1005.1L1133.4,1005.4L1128.2,1006.2L1122.3,1007.2L1116.3,1008.3L1111.1,1008.9L1105.3,1009.0L1099.5,1008.8L1094.4,1008.6L1090.9,1008.8Z"/><path d="M1137.5,1005.6L1139.5,1002.7L1141.9,998.6L1144.7,993.7L1147.7,988.2L1150.7,982.4L1153.6,976.6L1156.4,971.0L1158.7,966.1L1161.1,960.6L1163.4,955.0L1165.5,949.5L1167.3,944.2L1168.9,939.4L1170.2,935.4L1171.0,932.3L1170.3,932.0L1168.8,934.9L1167.2,938.8L1165.3,943.4L1163.3,948.6L1161.1,954.1L1158.9,959.7L1156.5,965.1L1154.2,970.0L1151.5,975.5L1148.5,981.2L1145.5,987.0L1142.7,992.6L1140.2,997.7L1138.2,1002.0L1136.9,1005.3Z"/><path d="M1154.2,973.1L1156.2,969.6L1158.6,964.5L1161.2,958.5L1163.8,952.6L1166.0,947.5L1168.7,941.9L1171.2,936.5L1173.4,932.0L1174.6,928.6L1174.0,928.3L1172.0,931.3L1169.5,935.7L1166.7,940.9L1164.0,946.5L1161.8,951.7L1159.2,957.7L1156.7,963.7L1154.7,969.0L1153.6,972.9Z"/><path d="M1142.4,813.4L1141.6,817.3L1140.8,823.0L1140.0,829.5L1139.7,835.6L1139.6,841.3L1139.6,847.1L1140.1,852.8L1141.7,858.4L1144.5,863.6L1148.3,868.6L1152.6,873.2L1156.8,877.4L1161.2,880.9L1165.8,883.9L1170.0,886.8L1173.4,890.2L1176.0,894.7L1178.2,899.7L1179.7,905.0L1180.5,909.9L1180.2,916.7L1178.6,923.5L1177.7,928.3L1178.4,928.6L1180.2,923.9L1182.2,917.1L1183.0,909.9L1182.1,904.5L1180.5,898.9L1178.2,893.6L1175.3,888.7L1171.5,884.9L1167.1,881.9L1162.6,879.0L1158.4,875.6L1154.3,871.5L1150.2,867.0L1146.5,862.3L1143.9,857.5L1142.5,852.4L1142.0,847.0L1142.0,841.3L1142.1,835.7L1142.3,829.7L1142.7,823.2L1143.1,817.5L1143.1,813.4Z"/><path d="M1118.5,804.5L1121.8,806.4L1126.7,808.8L1132.5,811.7L1138.6,814.5L1142.6,816.5L1146.9,818.7L1151.4,821.0L1156.2,823.3L1161.2,825.5L1166.5,827.5L1171.4,829.2L1176.8,830.8L1182.3,832.4L1188.0,833.8L1193.6,835.1L1198.9,836.2L1203.9,836.9L1210.4,837.2L1216.7,836.9L1222.5,836.2L1227.6,835.4L1231.9,834.8L1239.2,834.0L1243.0,833.2L1242.9,832.5L1239.1,832.5L1231.8,832.8L1227.4,833.2L1222.2,833.8L1216.5,834.5L1210.4,834.8L1204.1,834.5L1199.3,833.8L1194.1,832.8L1188.6,831.5L1183.0,830.0L1177.4,828.5L1172.2,826.9L1167.3,825.3L1162.1,823.3L1157.2,821.1L1152.5,818.8L1148.0,816.5L1143.7,814.3L1139.6,812.3L1133.4,809.6L1127.5,807.1L1122.5,805.0L1118.8,803.8Z"/><path d="M1066.4,884.1L1068.1,887.3L1070.7,891.6L1073.9,896.4L1076.9,901.2L1079.9,906.5L1083.1,912.4L1086.2,917.7L1088.7,921.2L1089.3,920.9L1087.7,916.9L1085.0,911.4L1081.8,905.4L1078.8,900.1L1075.7,895.2L1072.4,890.4L1069.3,886.4L1067.0,883.7Z"/><path d="M1072.0,902.7L1074.1,906.4L1076.7,909.8L1079.3,913.1L1081.9,916.4L1085.0,919.4L1085.5,919.0L1083.4,915.3L1080.8,911.9L1078.2,908.5L1075.6,905.2L1072.5,902.3Z"/><path d="M1094.8,1006.5L1096.6,1001.7L1097.9,996.7L1098.5,991.6L1098.0,991.5L1096.2,996.3L1094.9,1001.2L1094.3,1006.3Z"/><path d="M825.9,510.3L828.9,513.5L833.1,517.0L837.1,519.6L841.6,521.5L846.8,522.3L852.9,522.2L857.8,521.5L863.0,520.5L868.1,519.5L875.2,517.8L881.6,516.7L887.0,516.8L891.4,517.7L894.6,520.2L897.0,522.6L897.5,522.2L895.7,519.2L892.2,516.1L887.3,514.7L881.4,514.3L874.7,515.5L867.6,517.1L862.5,518.1L857.4,519.2L852.7,519.8L847.0,519.9L842.2,519.2L838.1,517.6L834.2,515.4L829.9,512.3L826.4,509.8Z"/><path d="M835.5,522.7L837.9,525.5L842.0,528.8L847.5,531.5L853.8,533.9L860.6,535.8L867.6,537.3L874.7,538.6L881.3,539.4L887.1,540.0L892.0,539.7L895.6,537.4L897.5,535.0L897.0,534.4L894.7,536.1L891.5,537.8L887.2,537.7L881.7,536.8L875.1,535.9L868.1,534.8L861.2,533.2L854.6,531.4L848.4,529.2L843.1,526.9L838.9,524.2L836.0,522.1Z"/><path d="M847.3,535.0L853.1,537.2L860.8,539.2L867.8,539.7L874.6,539.9L881.9,540.4L888.4,540.4L892.8,539.5L895.3,538.4L895.1,537.8L892.5,538.1L888.3,538.6L882.0,538.2L874.7,537.7L867.9,537.5L861.2,537.0L853.5,535.5L847.4,534.4Z"/><path d="M840.5,518.3L852.8,520.3L867.8,516.9L881.5,514.9L889.7,516.9L893.8,522.4L891.8,527.8L884.9,533.3L874.7,534.7L861.0,532.6L848.7,527.8L841.9,522.4Z"/></g></svg><!--/SKETCH-->
<div id="side" class="abs"></div>
<div class="abs track" style="top:318px;height:341px"></div>
<div class="abs thumb" style="top:434px"></div>
<div class="abs" style="left:20px;top:724px;width:40px;height:40px;box-sizing:border-box;border:2px solid #b0b0b0;border-radius:11px;"></div>
<div class="abs track" style="top:829px;height:340px"></div>
<div class="abs thumb" style="top:830px"></div>
<svg class="abs" style="left:0;top:0" width="2048" height="88" viewBox="0 0 2048 88">
<g fill="#a0a0a0">
<!-- wrench -->
<g transform="translate(244,37) rotate(45)">
<circle cx="0" cy="0" r="10.5"/>
<rect x="-3.85" y="2" width="7.7" height="26.2"/>
<path d="M-5.5,-16 L-5.4,-1.5 Q-4.8,1.2 -1.5,2.4 L0.2,2.8 Q4.2,1.2 5.8,-1.2 L6.6,-16 Z" fill="#151515"/>
</g>
<!-- magic wand -->
<line x1="349.9" y1="59.2" x2="374.8" y2="34.6" stroke="#a0a0a0" stroke-width="5.6"/>
<line x1="364.2" y1="40.3" x2="369.2" y2="45.1" stroke="#151515" stroke-width="1.1"/>
<path d="M355.5,26.4 Q356.7,34.2 364,35.4 Q356.7,36.6 355.5,44.4 Q354.3,36.6 347,35.4 Q354.3,34.2 355.5,26.4 Z"/>
<path d="M364.6,27.4 Q365.2,29.9 367.6,30.5 Q365.2,31.1 364.6,33.6 Q364,31.1 361.6,30.5 Q364,29.9 364.6,27.4 Z"/>
<path d="M372.6,45 Q373.2,47.8 375.6,48.5 Q373.2,49.2 372.6,52 Q372,49.2 369.6,48.5 Q372,47.8 372.6,45 Z"/>
<!-- selection S -->
<path d="M501,27 L490.5,27 Q485.5,27.8 482.5,32.8 L501,32.8 Z"/>
<path d="M480.9,36.1 L487.4,36.1 Q487.6,40.5 489.8,43 Q492,46 491.9,50.9 L485.1,50.9 Q485.2,47 483.2,44.3 Q480.8,41 480.9,36.1 Z"/>
<path d="M472,54.2 L490.2,54.2 Q487.5,59.4 482.5,60 L472,60 Z"/>
<!-- transform arrow -->
<path d="M626.2,27.9 L597.1,41.5 L607.9,42.9 L594.1,57.2 L596.9,59.8 L611.2,46.9 L612.4,56.7 Z"/>
</g>
<g fill="#cacaca">
<!-- brush -->
<path d="M1472.2,17.8 C1468,19.5 1462.5,23.2 1458.9,26.5 C1453,31.5 1446,38.8 1440,45 C1436,49 1434.8,51 1436.6,52.4 C1438.4,53.6 1441.5,50.5 1447.2,45.8 C1453,41 1460,34.8 1464,30.8 C1468.5,26 1471.2,22.5 1472.2,17.8 Z"/>
<path d="M1433.1,51.8 C1436,52 1438,54.5 1436.5,57.5 C1433,63 1428,67.6 1421.5,68 L1415.6,67.8 C1417.8,66.6 1419.3,64.5 1420.6,61.5 C1423,55.5 1427.5,52 1433.1,51.8 Z"/>
<!-- smudge -->
<path d="M1596.5,18.8 L1607.8,30 L1603.3,35.6 L1603.1,44.1 Q1603,48.5 1601.2,51.1 L1590.9,60.5 Q1587,62.8 1583.4,60.5 L1594.2,47.8 L1569.8,69.9 L1563,69.9 Q1559.5,66 1561.4,61.9 L1569.8,50.2 L1566.6,41.7 Q1565.5,38.5 1566.6,36.1 L1575.5,25.8 Q1577.5,24.2 1580,24.2 L1590.5,23.9 Z"/>
<line x1="1583.4" y1="60.5" x2="1594.2" y2="47.8" stroke="#1e1e1e" stroke-width="1.6" stroke-linecap="round"/>
<!-- layers -->
<rect x="1852" y="20" width="36" height="36"/>
<rect x="1839" y="30" width="39" height="39" fill="#0a0a0a"/>
<rect x="1840" y="32" width="36" height="36"/>
</g>
<!-- eraser -->
<g fill="#007aff" stroke="#00182e" stroke-width="1" stroke-linejoin="round">
<path d="M1736.8,17.8 L1753.4,34.5 L1725.3,62.4 L1709.1,45.7 Z"/>
<path d="M1707.5,47.8 L1723.9,64.5 L1721.1,67.7 L1711.2,67.7 L1699.3,55.3 Z"/>
</g>
<!-- color -->
<circle cx="2004" cy="44" r="28" fill="#6e6000" stroke="#141200" stroke-width="1"/>
</svg>
<svg class="abs" style="left:0;top:1190px" width="80" height="150" viewBox="0 1190 80 150">
<path d="M21.5,1219.6 L30.2,1210.8 L30.2,1228.4 Z" fill="#b0b0b0"/>
<path d="M29,1218.6 L45.8,1218.6 A11.2,11.2 0 0 1 45.8,1241 L25.8,1241" fill="none" stroke="#b0b0b0" stroke-width="2"/>
<path d="M57.8,1301.6 L49,1292.8 L49,1310.4 Z" fill="#3a3a3a"/>
<path d="M50,1301.2 L33.8,1301.2 A11,11 0 0 0 33.8,1323.2 L53,1323.2" fill="none" stroke="#3a3a3a" stroke-width="2"/>
</svg>
</body></html>
